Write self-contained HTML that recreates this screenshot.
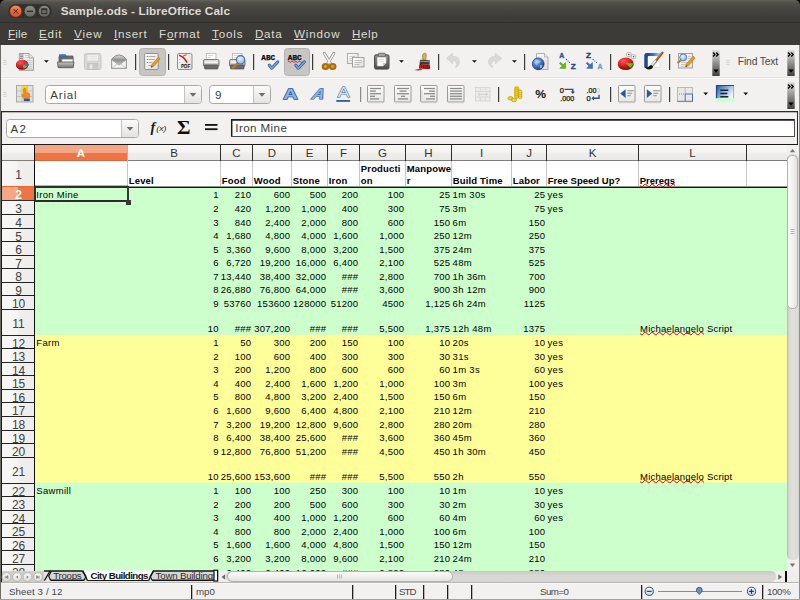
<!DOCTYPE html>
<html><head><meta charset="utf-8"><title>Sample.ods - LibreOffice Calc</title><style>
html,body{margin:0;padding:0}
body{width:800px;height:600px;position:relative;overflow:hidden;background:#f2f1f0;font-family:"Liberation Sans",sans-serif}
.t{position:absolute;white-space:nowrap;margin:0;padding:0}
.b{position:absolute;box-sizing:border-box}
svg{position:absolute;overflow:visible}
</style></head>
<body>
<div class="b" style="left:0px;top:0px;width:800px;height:600px;background:#f2f1f0"></div>
<div class="b" style="left:0px;top:0px;width:800px;height:6px;background:#000"></div>
<div class="b" style="left:0px;top:0px;width:800px;height:23px;border-radius:5px 5px 0 0;background:linear-gradient(#65645d 0px,#5b5a53 1px,#514f4a 3px,#494843 7px,#42413d 12px,#3d3c38 18px,#3c3b37 23px)"></div>
<div class="b" style="left:0px;top:22px;width:800px;height:1px;background:#302f2c"></div>
<div class="b" style="left:0px;top:23px;width:800px;height:22px;background:#3c3b37"></div>
<svg style="left:8px;top:4px" width="46" height="16" viewBox="0 0 46 16">
<defs>
<linearGradient id="gc" x1="0" y1="0" x2="0" y2="1"><stop offset="0" stop-color="#f68d67"/><stop offset="0.500" stop-color="#ec6435"/><stop offset="1" stop-color="#dd5220"/></linearGradient>
<linearGradient id="gm" x1="0" y1="0" x2="0" y2="1"><stop offset="0" stop-color="#8d8c85"/><stop offset="1" stop-color="#67665f"/></linearGradient>
</defs>
<rect x="0.300" y="0.300" width="43.400" height="14" rx="7" fill="#31302d"/>
<circle cx="7.750" cy="7.250" r="6.100" fill="url(#gc)" stroke="#5a2c16" stroke-width="0.800"/>
<path d="M5.500 5l4.500 4.500M10 5l-4.500 4.500" stroke="#4a1c0a" stroke-width="1" fill="none"/>
<circle cx="22" cy="7.250" r="5.900" fill="url(#gm)" stroke="#2c2b28" stroke-width="0.800"/>
<path d="M19 7.300h6" stroke="#2f2e2b" stroke-width="1.300"/>
<circle cx="36.250" cy="7.250" r="5.900" fill="url(#gm)" stroke="#2c2b28" stroke-width="0.800"/>
<rect x="33.700" y="5" width="5.100" height="4.700" fill="#6b6a63" stroke="#2f2e2b" stroke-width="1"/>
<path d="M33.700 5.300h5.100" stroke="#2f2e2b" stroke-width="1.500"/>
</svg>
<div class="t" style="left:60.8px;top:2.91px;font-size:11.8px;line-height:16px;color:#dfdbd2;font-weight:bold;letter-spacing:0.072px;">Sample.ods - LibreOffice Calc</div>
<div class="t" style="left:8px;top:26.18px;font-size:11.6px;line-height:16px;color:#dfdbd2;letter-spacing:0.177px;text-underline-offset:1px"><u>F</u>ile</div>
<div class="t" style="left:39px;top:26.18px;font-size:11.6px;line-height:16px;color:#dfdbd2;letter-spacing:0.853px;text-underline-offset:1px"><u>E</u>dit</div>
<div class="t" style="left:74px;top:26.18px;font-size:11.6px;line-height:16px;color:#dfdbd2;letter-spacing:0.867px;text-underline-offset:1px"><u>V</u>iew</div>
<div class="t" style="left:114px;top:26.18px;font-size:11.6px;line-height:16px;color:#dfdbd2;letter-spacing:0.732px;text-underline-offset:1px"><u>I</u>nsert</div>
<div class="t" style="left:159px;top:26.18px;font-size:11.6px;line-height:16px;color:#dfdbd2;letter-spacing:0.778px;text-underline-offset:1px">F<u>o</u>rmat</div>
<div class="t" style="left:212px;top:26.18px;font-size:11.6px;line-height:16px;color:#dfdbd2;letter-spacing:0.864px;text-underline-offset:1px"><u>T</u>ools</div>
<div class="t" style="left:255px;top:26.18px;font-size:11.6px;line-height:16px;color:#dfdbd2;letter-spacing:0.725px;text-underline-offset:1px"><u>D</u>ata</div>
<div class="t" style="left:294px;top:26.18px;font-size:11.6px;line-height:16px;color:#dfdbd2;letter-spacing:0.857px;text-underline-offset:1px"><u>W</u>indow</div>
<div class="t" style="left:352px;top:26.18px;font-size:11.6px;line-height:16px;color:#dfdbd2;letter-spacing:0.636px;text-underline-offset:1px"><u>H</u>elp</div>
<div class="b" style="left:0px;top:45px;width:800px;height:66px;background:#f2f1f0"></div>
<div class="b" style="left:1px;top:77px;width:798px;height:1px;background:#e5e3e0"></div>
<div class="b" style="left:1px;top:78px;width:798px;height:1px;background:#f9f8f7"></div>
<div class="b" style="left:0px;top:45px;width:1px;height:555px;background:#6d6b66"></div>
<div class="b" style="left:799px;top:45px;width:1px;height:555px;background:#908e8a"></div>
<div class="b" style="left:1px;top:111px;width:797px;height:34px;background:#f2f1f0;border:1px solid #2b2a28"></div>
<div class="b" style="left:2px;top:112px;width:795px;height:1px;background:#b9b7b3"></div>
<svg style="left:0;top:45px" width="800" height="100" viewBox="0 45 800 100"><defs>
<linearGradient id="ovf" x1="0" y1="0" x2="0" y2="1"><stop offset="0" stop-color="#dededc"/><stop offset="0.35" stop-color="#a9a9a6"/><stop offset="1" stop-color="#3f3f3d"/></linearGradient>
<linearGradient id="pg" x1="0" y1="0" x2="1" y2="1"><stop offset="0" stop-color="#ffffff"/><stop offset="1" stop-color="#dcdcda"/></linearGradient>
<linearGradient id="gry" x1="0" y1="0" x2="0" y2="1"><stop offset="0" stop-color="#c9c9c7"/><stop offset="1" stop-color="#727270"/></linearGradient>
<linearGradient id="prn" x1="0" y1="0" x2="0" y2="1"><stop offset="0" stop-color="#ececea"/><stop offset="1" stop-color="#9c9c9a"/></linearGradient>
<radialGradient id="pie" cx="0.35" cy="0.3" r="0.8"><stop offset="0" stop-color="#f45a5a"/><stop offset="0.6" stop-color="#d81c1c"/><stop offset="1" stop-color="#9e0b0b"/></radialGradient>
<radialGradient id="glb" cx="0.35" cy="0.3" r="0.8"><stop offset="0" stop-color="#8db6ea"/><stop offset="0.6" stop-color="#3b6cb5"/><stop offset="1" stop-color="#1e3f78"/></radialGradient>
<radialGradient id="mag" cx="0.4" cy="0.35" r="0.7"><stop offset="0" stop-color="#e6f1fc"/><stop offset="1" stop-color="#8db4e2"/></radialGradient>
<linearGradient id="bga" x1="0" y1="0" x2="1" y2="0.6"><stop offset="0" stop-color="#1f4f96"/><stop offset="0.45" stop-color="#7a9fd0"/><stop offset="1" stop-color="#f4f6f8"/></linearGradient>
<linearGradient id="cmb" x1="0" y1="0" x2="0" y2="1"><stop offset="0" stop-color="#fafaf9"/><stop offset="1" stop-color="#e4e3e1"/></linearGradient>
<linearGradient id="abx" x1="0" y1="0" x2="0" y2="1"><stop offset="0" stop-color="#fdfdfc"/><stop offset="1" stop-color="#e6e6e3"/></linearGradient>
</defs>
<path d="M3 60.4h3.600M3 62.4h3.600M3 64.4h3.600" stroke="#d3d1cd" stroke-width="0.900"/>
<path d="M3 92.4h3.600M3 94.4h3.600M3 96.4h3.600" stroke="#d3d1cd" stroke-width="0.900"/>
<path d="M726 60.4h3.600M726 62.4h3.600M726 64.4h3.600" stroke="#d3d1cd" stroke-width="0.900"/>
<rect x="135" y="54" width="1" height="16" fill="#3a3a38"/><rect x="136" y="54" width="0.6" height="16" fill="#3a3a38" opacity="0.35"/>
<rect x="168" y="54" width="1" height="16" fill="#3a3a38"/><rect x="169" y="54" width="0.6" height="16" fill="#3a3a38" opacity="0.35"/>
<rect x="253" y="54" width="1" height="16" fill="#3a3a38"/><rect x="254" y="54" width="0.6" height="16" fill="#3a3a38" opacity="0.35"/>
<rect x="312" y="54" width="1" height="16" fill="#3a3a38"/><rect x="313" y="54" width="0.6" height="16" fill="#3a3a38" opacity="0.35"/>
<rect x="438" y="54" width="1" height="16" fill="#3a3a38"/><rect x="439" y="54" width="0.6" height="16" fill="#3a3a38" opacity="0.35"/>
<rect x="524" y="54" width="1" height="16" fill="#3a3a38"/><rect x="525" y="54" width="0.6" height="16" fill="#3a3a38" opacity="0.35"/>
<rect x="610" y="54" width="1" height="16" fill="#3a3a38"/><rect x="611" y="54" width="0.6" height="16" fill="#3a3a38" opacity="0.35"/>
<rect x="669" y="54" width="1" height="16" fill="#3a3a38"/><rect x="670" y="54" width="0.6" height="16" fill="#3a3a38" opacity="0.35"/>
<rect x="360" y="87" width="1" height="15" fill="#8c8a87"/><rect x="361" y="87" width="0.6" height="15" fill="#8c8a87" opacity="0.35"/>
<rect x="498" y="87" width="1" height="15" fill="#3a3a38"/><rect x="499" y="87" width="0.6" height="15" fill="#3a3a38" opacity="0.35"/>
<rect x="610" y="87" width="1" height="15" fill="#3a3a38"/><rect x="611" y="87" width="0.6" height="15" fill="#3a3a38" opacity="0.35"/>
<rect x="669" y="87" width="1" height="15" fill="#3a3a38"/><rect x="670" y="87" width="0.6" height="15" fill="#3a3a38" opacity="0.35"/>
<rect x="139.5" y="48.5" width="26" height="27" rx="3" fill="#c8c6c3" stroke="#b4b2ae"/>
<rect x="284.5" y="48.5" width="25" height="27" rx="3" fill="#c8c6c3" stroke="#b4b2ae"/>
<rect x="712.3" y="50" width="7.400" height="26" fill="url(#ovf)"/>
<path d="M713 52.5l2 2l-2 2M716.2 52.5l2 2l-2 2" stroke="#000" stroke-width="1.3" fill="none"/>
<path d="M713.3 69.5h5.4l-2.7 3.2z" fill="#000"/>
<rect x="787.3" y="50" width="7.400" height="26" fill="url(#ovf)"/>
<path d="M788 52.5l2 2l-2 2M791.2 52.5l2 2l-2 2" stroke="#000" stroke-width="1.3" fill="none"/>
<path d="M788.3 69.5h5.4l-2.7 3.2z" fill="#000"/>
<rect x="787.3" y="82" width="7.400" height="27" fill="url(#ovf)"/>
<path d="M788 84.5l2 2l-2 2M791.2 84.5l2 2l-2 2" stroke="#000" stroke-width="1.3" fill="none"/>
<path d="M788.3 102.5h5.4l-2.7 3.2z" fill="#000"/>
<path d="M19.300 53.500h9.700l4.500 4.500v12.300h-14.200z" fill="url(#pg)" stroke="#9b9b99" stroke-width="1"/>
<path d="M29 53.500v4.500h4.500" fill="#e4e4e2" stroke="#9b9b99" stroke-width="0.800"/>
<path d="M20 55h3.500M20 56.700h3.500M20 58.400h3.500" stroke="#6a6a68" stroke-width="0.900"/>
<path d="M24.500 55.500h4M24.500 57.500h4M27 60.500h5M28.500 62.500h3.500M29 64.500h3M29 66.500h3M27 68.500h5" stroke="#c3c3c1" stroke-width="0.800"/>
<ellipse cx="22.200" cy="65.300" rx="6.200" ry="4.500" fill="#7a0a0a"/>
<ellipse cx="22.200" cy="64.200" rx="6.200" ry="4.500" fill="url(#pie)"/>
<path d="M23 64.400L27.800 62.300A6.200 4.500 0 0 1 27.400 66.800z" fill="#3f6fc0"/>
<path d="M23 64.400L27.400 66.800A6.200 4.500 0 0 1 23.400 68.600z" fill="#6cc02c"/>
<path d="M44.0 60.2h4.800l-2.400 2.600z" fill="#111"/>
<rect x="59" y="56" width="14.200" height="10.500" rx="1" fill="#6c6c6a" stroke="#58585a" stroke-width="0.800"/>
<path d="M59.500 57v-2.300h6l1 2.300z" fill="#4f78b8" stroke="#34558c" stroke-width="0.700"/>
<rect x="62" y="59.300" width="10.800" height="3" fill="#fbfbfb" stroke="#b5b5b3" stroke-width="0.500"/>
<path d="M57.500 62h16.500l-0.800 5.700h-15z" fill="url(#gry)" stroke="#5c5c5a" stroke-width="0.900"/>
<rect x="84.500" y="53.500" width="16.500" height="16" rx="1.800" fill="#d8d8d6" stroke="#c6c6c4"/>
<rect x="87" y="54.500" width="11.500" height="6.500" fill="#f1f1f0" stroke="#cfcfcd" stroke-width="0.700"/>
<path d="M88.500 56.500h8.500M88.500 58.500h8.500" stroke="#dededc" stroke-width="0.800"/>
<rect x="87.700" y="63.300" width="10" height="6.200" fill="#c9c9c7" stroke="#bdbdbb" stroke-width="0.700"/>
<rect x="89.700" y="64.500" width="2.600" height="4.500" fill="#e9e9e7"/>
<defs><linearGradient id="env" x1="0" y1="0" x2="0" y2="1"><stop offset="0" stop-color="#e6e6e4"/><stop offset="0.380" stop-color="#8e8e8c"/><stop offset="1" stop-color="#ececea"/></linearGradient></defs>
<path d="M111.500 59.300Q119 50.500 126.500 59.300V68.500H111.500z" fill="url(#env)" stroke="#8b8b89" stroke-width="1"/>
<path d="M111.800 59.800L119 65.200L126.200 59.800V68.200H111.800z" fill="#f7f7f6" stroke="#9d9d9b" stroke-width="0.700"/>
<path d="M111.800 68.200L117.300 63.900M126.200 68.200L120.700 63.900" fill="none" stroke="#b9b9b7" stroke-width="0.800"/>
<rect x="144.700" y="53.500" width="13.500" height="16" rx="1" fill="url(#pg)" stroke="#8f8f8d"/>
<path d="M148.5 56.5h7M148.5 59.5h6M148.5 62.5h4M148.5 65.5h3" stroke="#a4a4a2" stroke-width="0.9"/>
<path d="M146.8 56.5h1M146.8 59.5h1M146.8 62.5h1" stroke="#555" stroke-width="0.9"/>
<path d="M158.3 57.2l1.8 1.6l-6.3 7.4l-2.6 1.2l0.7-2.8z" fill="#f39a1d" stroke="#b5650c" stroke-width="0.6"/>
<path d="M151.2 67.4l0.4-1.5l1.1 0.9z" fill="#222"/>
<rect x="177.5" y="53.5" width="14.5" height="16" rx="1.5" fill="url(#pg)" stroke="#8f8f8d"/>
<path d="M179 55.2C182.5 56.3 185.2 58.8 187 62.6" fill="none" stroke="#d41414" stroke-width="1.5"/>
<path d="M182 57.3C183.2 55.6 184.8 54.8 186.6 54.9" fill="none" stroke="#e04848" stroke-width="1.1"/>
<text x="181" y="67.900" font-family="Liberation Sans" font-weight="bold" font-size="4.800" fill="#151515" textLength="9.300" lengthAdjust="spacingAndGlyphs">PDF</text>
<path d="M179.3 59.5h0.8M179.3 62.5h0.8" stroke="#777" stroke-width="0.8"/>
<rect x="206.5" y="53.5" width="9.5" height="6.5" fill="#fbfbfb" stroke="#b3b3b1" stroke-width="0.8"/>
<path d="M208 55.5h5M208 57.5h3" stroke="#cfcfcd" stroke-width="0.8"/>
<rect x="203.5" y="59.5" width="15.5" height="7" rx="1.5" fill="url(#prn)" stroke="#6d6d6b" stroke-width="0.9"/>
<rect x="204.6" y="61.6" width="13.2" height="1.6" fill="#f7f7f6"/>
<rect x="204.5" y="65" width="13.5" height="4" rx="0.8" fill="#6a6a68" stroke="#4f4f4d" stroke-width="0.7"/>
<rect x="232.5" y="53.5" width="9.5" height="6.5" fill="#fbfbfb" stroke="#b3b3b1" stroke-width="0.8"/>
<path d="M234 55.5h5M234 57.5h3" stroke="#cfcfcd" stroke-width="0.8"/>
<rect x="229.5" y="59.5" width="15.5" height="7" rx="1.5" fill="url(#prn)" stroke="#6d6d6b" stroke-width="0.9"/>
<rect x="230.6" y="61.6" width="13.2" height="1.6" fill="#f7f7f6"/>
<rect x="230.5" y="65" width="13.5" height="4" rx="0.8" fill="#6a6a68" stroke="#4f4f4d" stroke-width="0.7"/>
<path d="M237.6 63l-4.6 5" stroke="#c77c12" stroke-width="2.2" stroke-linecap="round"/>
<circle cx="240.6" cy="59.8" r="4.2" fill="url(#mag)" stroke="#4a6f9f" stroke-width="1.1"/>
<text x="261.3" y="59.900" font-family="Liberation Mono" font-weight="bold" font-size="6.900" fill="#0a0a0a" stroke="#0a0a0a" stroke-width="0.250" textLength="13.800" lengthAdjust="spacingAndGlyphs">ABC</text>
<path d="M269.3 65.200l2.500 3l6-6.300" fill="none" stroke="#2f5d9e" stroke-width="3" stroke-linecap="round" stroke-linejoin="round"/>
<path d="M269.3 65.200l2.500 3l6-6.300" fill="none" stroke="#7fa9e0" stroke-width="1.400" stroke-linecap="round" stroke-linejoin="round"/>
<text x="287.8" y="59.900" font-family="Liberation Mono" font-weight="bold" font-size="6.900" fill="#0a0a0a" stroke="#0a0a0a" stroke-width="0.250" textLength="13.800" lengthAdjust="spacingAndGlyphs">ABC</text>
<path d="M287.8 61.800q0.900 -1 1.800 0t1.800 0t1.800 0t1.800 0t1.800 0t1.800 0t1.800 0t1.800 0" fill="none" stroke="#e01010" stroke-width="0.900"/>
<path d="M295.8 65.200l2.500 3l6-6.300" fill="none" stroke="#2f5d9e" stroke-width="3" stroke-linecap="round" stroke-linejoin="round"/>
<path d="M295.8 65.200l2.500 3l6-6.300" fill="none" stroke="#7fa9e0" stroke-width="1.400" stroke-linecap="round" stroke-linejoin="round"/>
<path d="M324.300 53.300L331.400 65M333.900 53.300L326.800 65" stroke="#8a8a88" stroke-width="2.800" stroke-linecap="round"/>
<path d="M324.300 53.300L331.400 65M333.900 53.300L326.800 65" stroke="#f1f1ef" stroke-width="1.500" stroke-linecap="round"/>
<ellipse cx="325.500" cy="66.500" rx="2.700" ry="2.500" fill="#d6a24e" stroke="#b06c06" stroke-width="2.200"/>
<ellipse cx="332.700" cy="66.500" rx="2.700" ry="2.500" fill="#d6a24e" stroke="#b06c06" stroke-width="2.200"/>
<rect x="347.5" y="53.5" width="10.5" height="10" fill="url(#pg)" stroke="#a3a3a1" stroke-width="0.9"/>
<path d="M349.5 56.5h6M349.5 58.5h6M349.5 60.5h3" stroke="#c2c2c0" stroke-width="0.8"/>
<rect x="352.5" y="57.5" width="11.5" height="9.5" fill="url(#pg)" stroke="#9b9b99" stroke-width="0.9"/>
<path d="M354.5 60.5h7.5M354.5 62.5h7.5M354.5 64.5h5" stroke="#b3b3b1" stroke-width="0.8"/>
<defs><linearGradient id="clp" x1="0" y1="0" x2="0" y2="1"><stop offset="0" stop-color="#8c8c8a"/><stop offset="0.600" stop-color="#6a6a67"/><stop offset="1" stop-color="#484846"/></linearGradient></defs>
<rect x="374.500" y="54.800" width="14.500" height="14.300" rx="1.500" fill="url(#clp)" stroke="#4b4b49"/>
<rect x="378.300" y="53.200" width="7" height="3.400" rx="1" fill="#a3a3a0" stroke="#5a5a58" stroke-width="0.800"/>
<path d="M377.300 57.300h8.700v5.700l-3 3h-5.700z" fill="#f9f9f8" stroke="#d5d5d3" stroke-width="0.500"/>
<path d="M386 63l-3 3v-3z" fill="#c4c4c2"/>
<path d="M379 59.500h5M379 61.500h5" stroke="#d6d6d4" stroke-width="0.800"/>
<path d="M399.09999999999997 60.2h4.800l-2.400 2.600z" fill="#111"/>
<path d="M423.900 53.500c1.400-0.800 2.500 0 2.300 1.500l-0.500 4.800h-2.800l-0.300-3.800c-0.100-1.200 0.400-2 1.300-2.500z" fill="#e3b04d" stroke="#9a6a18" stroke-width="0.700"/>
<path d="M420 59.700l9.800 0.500l-0.300 4.600l-9.900-0.700z" fill="#3a3a39"/>
<path d="M420.200 61.200l9.400 0.500" stroke="#b5b5b3" stroke-width="0.800"/>
<path d="M419.500 64l10.200 0.700l0.500 4c-3.400 0.500-7 0.400-11.200-0.400z" fill="#7a1010"/>
<path d="M420.500 65v3M422.500 65v3.300M424.500 65.200v3.300M426.500 65.300v3.300M428.500 65.400v3" stroke="#d42020" stroke-width="0.800"/>
<path d="M413.800 69.900c2.600-0.200 5-0.700 6.900-1.600l1.600 1.500c-2.800 0.700-5.700 0.800-8.500 0.100z" fill="#e01b1b"/>
<path d="M446.3 58.3L452.6 53.2V56.3C457.5 56.3 459.6 59.2 459.4 62.3C459.2 65 457.6 66.8 455.3 67.4C456.8 65.6 457 63.6 456 62.2C455.2 61 454 60.5 452.6 60.5V63.6z" fill="#d9d9d7" stroke="#cacac8" stroke-width="0.6"/>
<path d="M472.0 60.2h4.800l-2.400 2.600z" fill="#111"/>
<path d="M501.7 58.3L495.4 53.2V56.3C490.5 56.3 488.400 59.2 488.6 62.3C488.8 65 490.4 66.8 492.7 67.4C491.2 65.600 491 63.6 492 62.2C492.8 61 494 60.5 495.4 60.5V63.6z" fill="#d9d9d7" stroke="#cacac8" stroke-width="0.6"/>
<path d="M512.0 60.2h4.800l-2.400 2.600z" fill="#111"/>
<path d="M536.5 53.5h8l3.5 3.5v12.500h-11.500z" fill="url(#pg)" stroke="#a6a6a4" stroke-width="0.9"/>
<path d="M544.5 53.500v3.500h3.500" fill="#e8e8e6" stroke="#a6a6a4" stroke-width="0.7"/>
<circle cx="538.200" cy="63.800" r="5.900" fill="url(#glb)" stroke="#1f3f78" stroke-width="0.800"/>
<path d="M534.500 61q1.500-1.800 3.500-0.800t2.800 0.500q-0.500 2.300-2.200 2.300t-1 2.200q-2.500-0.500-3.100-4.200z M539.800 65.200q1.700-0.500 2.700 0.600q-0.500 2.200-2.200 2.700z" fill="#a8ccf4" opacity="0.850"/>
<text x="559.2" y="58.300" font-family="Liberation Sans" font-weight="bold" font-size="6.600" fill="#2a5298" stroke="#2a5298" stroke-width="0.350" textLength="5" lengthAdjust="spacingAndGlyphs">A</text>
<text x="570.7" y="68.900" font-family="Liberation Sans" font-weight="bold" font-size="6.600" fill="#1f3f7a" stroke="#1f3f7a" stroke-width="0.350" textLength="5" lengthAdjust="spacingAndGlyphs">Z</text>
<circle cx="566.4000000000001" cy="59.500" r="0.650" fill="#2a4f8f"/><circle cx="568.0" cy="61" r="0.600" fill="#2a4f8f"/><circle cx="569.6" cy="62.400" r="0.550" fill="#2a4f8f"/>
<path transform="translate(559.2 62)" d="M0.200 1.400L1.400 0.200L4 2.800L6.400 0.600L6.500 6.400L0.600 6.300L3 3.900Z" fill="#62be16" stroke="#3e8a0c" stroke-width="0.500" stroke-linejoin="round"/>
<text x="586" y="58.300" font-family="Liberation Sans" font-weight="bold" font-size="6.600" fill="#1f3f7a" stroke="#1f3f7a" stroke-width="0.350" textLength="5" lengthAdjust="spacingAndGlyphs">Z</text>
<text x="597.5" y="68.900" font-family="Liberation Sans" font-weight="bold" font-size="6.600" fill="#6a9ad8" stroke="#6a9ad8" stroke-width="0.350" textLength="5" lengthAdjust="spacingAndGlyphs">A</text>
<circle cx="593.2" cy="59.500" r="0.650" fill="#2a4f8f"/><circle cx="594.8" cy="61" r="0.600" fill="#2a4f8f"/><circle cx="596.4" cy="62.400" r="0.550" fill="#2a4f8f"/>
<path transform="translate(586 62)" d="M0.200 1.400L1.400 0.200L4 2.800L6.400 0.600L6.500 6.400L0.600 6.300L3 3.900Z" fill="#3c74c4" stroke="#244f94" stroke-width="0.500" stroke-linejoin="round"/>
<ellipse cx="625.700" cy="64.600" rx="7.800" ry="5.400" fill="#9a0c0c"/>
<ellipse cx="625.700" cy="63" rx="7.800" ry="5.400" fill="url(#pie)"/>
<path d="M625.500 62.800L633.500 63.600A7.800 5.400 0 0 1 630.200 67.700z" fill="#58c818"/>
<path d="M630.200 67.700L633.500 63.600L633.500 65.200L630.200 69.300z" fill="#2f7d0a"/>
<rect x="626.600" y="52.600" width="4.400" height="3.800" rx="1" fill="#f4f4f2" stroke="#9c9c9a" stroke-width="0.700"/>
<rect x="631.300" y="54.800" width="4.400" height="3.800" rx="1" fill="#f4f4f2" stroke="#9c9c9a" stroke-width="0.700"/>
<circle cx="628.800" cy="54.500" r="0.700" fill="#444"/><circle cx="633.500" cy="56.700" r="0.700" fill="#444"/>
<defs><linearGradient id="dfr" x1="0" y1="0" x2="1" y2="0"><stop offset="0" stop-color="#1c4a90"/><stop offset="0.550" stop-color="#3f6db0"/><stop offset="1" stop-color="#cfd9e8"/></linearGradient></defs>
<rect x="647.500" y="56" width="12.500" height="11.500" fill="#fdfdfd" stroke="#d6d6d4" stroke-width="0.600"/>
<path d="M644.500 55.800c0-1.900 0.900-2.800 2.800-2.800h13v3h-11.800c-0.700 0-1 0.300-1 1v10.500h-3z" fill="url(#dfr)"/>
<path d="M644.500 55.800c0-1.900 0.900-2.800 2.800-2.800h2v3h-0.800c-0.700 0-1 0.300-1 1v10.500h-3z" fill="#1c4a90"/>
<path d="M662.400 52.800l-6.600 8.200" stroke="#8e5a24" stroke-width="2.400" stroke-linecap="round"/>
<path d="M662 52.600l-6.400 8" stroke="#c08a4c" stroke-width="0.800" stroke-linecap="round"/>
<path d="M656 60.700l-4.600 5.600" stroke="#8f8f8d" stroke-width="3"/>
<path d="M655.700 60.500l-4.600 5.600" stroke="#ececea" stroke-width="1.500"/>
<path d="M651.900 65.400c-1.300-0.300-2.600 0.300-3.200 1.400c-0.800 0.600-2.400 0.400-3.700 0c0.300 1.600 1.800 2.700 3.800 2.700c2.300 0 3.900-1.200 4.400-3z" fill="#121212"/>
<rect x="678.500" y="53.500" width="14" height="14.500" fill="url(#pg)" stroke="#9b9b99" stroke-width="0.900"/>
<path d="M681 62.500h9M681 64.500h7M681 66.300h6M688 56.500h3M688 58.500h3" stroke="#c0c0be" stroke-width="0.800"/>
<path d="M680.800 60.200l-2.600 2.400" stroke="#c07a14" stroke-width="2.100" stroke-linecap="round"/>
<circle cx="683.200" cy="57.400" r="3.500" fill="url(#mag)" stroke="#5a7ba6" stroke-width="1"/>
<path d="M693.100 56.300l1.900 1.600l-6.600 7.700l-2.700 1.200l0.700-2.800z" fill="#f39a1d" stroke="#b5650c" stroke-width="0.600"/>
<path d="M685.700 66.800l0.400-1.500l1.100 0.900z" fill="#222"/>
<rect x="16.500" y="85.500" width="16.500" height="16.500" fill="#e1e1dd" stroke="#a2a29e" stroke-width="0.900"/>
<path d="M22 85.500v16.500M27.500 85.500v16.500M16.500 91h16.500M16.500 96.500h16.500" stroke="#b9b9b5" stroke-width="0.800"/>
<rect x="22.200" y="86.300" width="4.800" height="5" fill="#f6d90a"/>
<path d="M24.700 88.300c0.700 0 1.100 0.400 1.100 1.100v3.200l2.600 0.400c1 0.200 1.500 0.800 1.400 1.800l-0.400 3.700h-5.600l-2-3.200c-0.400-0.700 0.300-1.300 1-0.800l0.800 0.700v-5.800c0-0.700 0.400-1.100 1.100-1.100z" fill="#f28c1c" stroke="#c7650a" stroke-width="0.500"/>
<rect x="23.800" y="98.800" width="6" height="2.300" fill="#2757a8"/>
<rect x="45.5" y="85.5" width="156" height="18" rx="3" fill="#fff" stroke="#aaa8a4"/>
<path d="M184.5 86h14a2.500 2.500 0 0 1 2.500 2.500v12a2.500 2.500 0 0 1 -2.500 2.500h-14z" fill="url(#cmb)"/>
<path d="M184.5 86v17" stroke="#c4c2be" stroke-width="1"/>
<path d="M189.7 92.9h6.600l-3.300 3.900z" fill="#6f6e6a"/>
<rect x="209.5" y="85.5" width="61" height="18" rx="3" fill="#fff" stroke="#aaa8a4"/>
<path d="M253.5 86h14a2.500 2.500 0 0 1 2.500 2.500v12a2.500 2.500 0 0 1 -2.500 2.500h-14z" fill="url(#cmb)"/>
<path d="M253.5 86v17" stroke="#c4c2be" stroke-width="1"/>
<path d="M258.7 92.9h6.600l-3.300 3.900z" fill="#6f6e6a"/>
<rect x="6.5" y="119.5" width="132" height="18" rx="3" fill="#fff" stroke="#aaa8a4"/>
<path d="M121.5 120h14a2.500 2.500 0 0 1 2.500 2.500v12a2.500 2.500 0 0 1 -2.500 2.500h-14z" fill="url(#cmb)"/>
<path d="M121.5 120v17" stroke="#c4c2be" stroke-width="1"/>
<path d="M126.7 126.9h6.600l-3.300 3.900z" fill="#6f6e6a"/>
<text x="283.300" y="99.100" font-family="Liberation Sans" font-weight="bold" font-size="14.800" fill="#8db4e6" stroke="#23539a" stroke-width="1.300" paint-order="stroke" textLength="14.400" lengthAdjust="spacingAndGlyphs">A</text>
<g transform="translate(310.800 99.100) skewX(-24)"><text x="0" y="0" font-family="Liberation Sans" font-weight="bold" font-size="14.800" fill="#8db4e6" stroke="#23539a" stroke-width="1.200" paint-order="stroke" textLength="12" lengthAdjust="spacingAndGlyphs">A</text></g>
<text x="337.700" y="97.100" font-family="Liberation Sans" font-size="15.300" fill="#dbe7f6" stroke="#23539a" stroke-width="0.950" paint-order="stroke" textLength="11.600" lengthAdjust="spacingAndGlyphs">A</text>
<rect x="336.300" y="100.100" width="13.800" height="1.700" fill="#23539a"/>
<rect x="367.5" y="85.500" width="16.500" height="16.500" rx="0.800" fill="url(#abx)" stroke="#9b9a96"/><path d="M368 102.700h16" stroke="#d0cfcb" stroke-width="0.800"/>
<path d="M370 88.5h11" stroke="#8b8c88" stroke-width="1.300"/>
<path d="M370 91.1h6" stroke="#8b8c88" stroke-width="1.300"/>
<path d="M370 93.7h11" stroke="#8b8c88" stroke-width="1.300"/>
<path d="M370 96.3h5" stroke="#8b8c88" stroke-width="1.300"/>
<path d="M370 98.9h9" stroke="#8b8c88" stroke-width="1.300"/>
<rect x="394.5" y="85.500" width="16.500" height="16.500" rx="0.800" fill="url(#abx)" stroke="#9b9a96"/><path d="M395 102.700h16" stroke="#d0cfcb" stroke-width="0.800"/>
<path d="M397 88.5h12" stroke="#8b8c88" stroke-width="1.300"/>
<path d="M399.5 91.1h7.0" stroke="#8b8c88" stroke-width="1.300"/>
<path d="M397 93.7h12" stroke="#8b8c88" stroke-width="1.300"/>
<path d="M401 96.3h4" stroke="#8b8c88" stroke-width="1.300"/>
<path d="M398 98.9h10" stroke="#8b8c88" stroke-width="1.300"/>
<rect x="420.5" y="85.500" width="16.500" height="16.500" rx="0.800" fill="url(#abx)" stroke="#9b9a96"/><path d="M421 102.700h16" stroke="#d0cfcb" stroke-width="0.800"/>
<path d="M424 88.5h11" stroke="#8b8c88" stroke-width="1.300"/>
<path d="M429 91.1h6" stroke="#8b8c88" stroke-width="1.300"/>
<path d="M424 93.7h11" stroke="#8b8c88" stroke-width="1.300"/>
<path d="M430 96.3h5" stroke="#8b8c88" stroke-width="1.300"/>
<path d="M426 98.9h9" stroke="#8b8c88" stroke-width="1.300"/>
<rect x="447.5" y="85.500" width="16.500" height="16.500" rx="0.800" fill="url(#abx)" stroke="#9b9a96"/><path d="M448 102.700h16" stroke="#d0cfcb" stroke-width="0.800"/>
<path d="M450 88.5h12" stroke="#8e8f8b" stroke-width="1.300"/>
<path d="M450 91.1h12" stroke="#8e8f8b" stroke-width="1.300"/>
<path d="M450 93.7h12" stroke="#8e8f8b" stroke-width="1.300"/>
<path d="M450 96.3h12" stroke="#8e8f8b" stroke-width="1.300"/>
<path d="M450 98.9h12" stroke="#8e8f8b" stroke-width="1.300"/>
<path d="M421.800 90.500v9" stroke="#dcdcd8" stroke-width="1.500"/>
<rect x="475.500" y="87.500" width="14.500" height="13.500" fill="#ecece9" stroke="#d2d2cf" stroke-width="0.800"/>
<path d="M480.300 87.500v4M485.200 87.500v4M480.300 97v4M485.200 97v4M475.500 91.500h14.500M475.500 97h14.500" stroke="#d2d2cf" stroke-width="0.800"/>
<path d="M478 94.300h9.500M478 94.300l1.800-1.500M478 94.300l1.800 1.500M487.500 94.300l-1.800-1.500M487.500 94.300l-1.800 1.500" stroke="#c6c6c3" stroke-width="0.800" fill="none"/>
<rect x="514.700" y="86.800" width="4" height="11.500" rx="1.500" fill="#f2cf14" stroke="#b8960a" stroke-width="0.700"/>
<path d="M514.900 89.300h3.600M514.900 91.300h3.600M514.900 93.300h3.600M514.900 95.300h3.600" stroke="#c9a50c" stroke-width="0.600"/>
<rect x="518.500" y="90" width="3.300" height="8.600" rx="1.300" fill="#f5d83a" stroke="#b8960a" stroke-width="0.700"/>
<path d="M518.700 92.500h2.900M518.700 94.500h2.900M518.700 96.500h2.900" stroke="#c9a50c" stroke-width="0.600"/>
<ellipse cx="510.500" cy="98.300" rx="2.600" ry="1.700" fill="#f2cf14" stroke="#b8960a" stroke-width="0.700"/>
<ellipse cx="514" cy="100" rx="2.600" ry="1.700" fill="#f5d83a" stroke="#b8960a" stroke-width="0.700"/>
<text x="535.300" y="97.700" font-family="Liberation Sans" font-weight="bold" font-size="11" fill="#0c0c0c" textLength="10.800" lengthAdjust="spacingAndGlyphs">%</text>
<text x="559.800" y="92.700" font-family="Liberation Sans" font-size="7.300" fill="#111" stroke="#111" stroke-width="0.250" textLength="4.200" lengthAdjust="spacingAndGlyphs">0</text>
<path d="M564.600 89.400h8.200v3" fill="none" stroke="#2c4f80" stroke-width="1.400"/><path d="M570.600 91.600h4.400l-2.200 2.500z" fill="#2c4f80"/>
<text x="560.300" y="100.600" font-family="Liberation Sans" font-size="7" fill="#111" stroke="#111" stroke-width="0.250" textLength="14" lengthAdjust="spacingAndGlyphs">.000</text>
<text x="586.500" y="93" font-family="Liberation Sans" font-size="7" fill="#111" stroke="#111" stroke-width="0.250" textLength="9.800" lengthAdjust="spacingAndGlyphs">.00</text>
<text x="596.500" y="93" font-family="Liberation Sans" font-size="7" fill="#b9b9b7" textLength="3.500" lengthAdjust="spacingAndGlyphs">0</text>
<text x="586.500" y="100.700" font-family="Liberation Sans" font-size="7.300" fill="#111" stroke="#111" stroke-width="0.250" textLength="4.200" lengthAdjust="spacingAndGlyphs">0</text>
<path d="M599 94.800v3.400h-6" fill="none" stroke="#2c4f80" stroke-width="1.400"/><path d="M594 96v4.400l-2.700-2.200z" fill="#2c4f80"/>
<rect x="618.5" y="85.500" width="16.500" height="16.500" rx="0.800" fill="url(#abx)" stroke="#9b9a96"/><path d="M619 102.700h16" stroke="#d0cfcb" stroke-width="0.800"/>
<path d="M625.600 89.300v8.600l-5.400-4.300z" fill="#2a55a0"/>
<path d="M627.300 90.800h6.500M627.300 93.300h5M627.300 95.800h3.500" stroke="#8b8c88" stroke-width="1.100"/>
<rect x="644.5" y="85.500" width="16.500" height="16.500" rx="0.800" fill="url(#abx)" stroke="#9b9a96"/><path d="M645 102.700h16" stroke="#d0cfcb" stroke-width="0.800"/>
<path d="M646.800 89.300v8.600l5.400-4.300z" fill="#2a55a0"/>
<path d="M653.300 90.800h6.500M653.300 93.300h5M653.300 95.800h3.500" stroke="#8b8c88" stroke-width="1.100"/>
<rect x="677.500" y="87.500" width="15" height="13.500" fill="#e8e8e5" stroke="#b3b3af" stroke-width="0.900"/>
<path d="M677 101.600h16" stroke="#858581" stroke-width="1"/>
<path d="M685.200 88.500v5M679 94h5.500" stroke="#7a7a76" stroke-width="0.900" stroke-dasharray="1 1"/>
<path d="M685.200 101v-7h7.300v7" fill="none" stroke="#3a62a8" stroke-width="0.900"/>
<path d="M703.3 92.60000000000001h4.800l-2.400 2.600z" fill="#111"/>
<rect x="716" y="85" width="18" height="13.500" fill="url(#bga)"/>
<path d="M716.500 98.500v-13h17.500" fill="none" stroke="#1f4a8a" stroke-width="1.200"/>
<path d="M733.600 86v12.500" fill="none" stroke="#9a9a98" stroke-width="0.800"/>
<path d="M720.300 90.200h8M720.300 93.500h7M720.300 96.800h8" stroke="#18253f" stroke-width="1.500"/>
<rect x="716" y="98.300" width="18" height="3.900" fill="#ccffcc"/>
<path d="M743.3 92.60000000000001h4.800l-2.400 2.600z" fill="#111"/>
<text x="150.500" y="131.800" font-family="Liberation Serif" font-style="italic" font-weight="bold" font-size="14.500" fill="#1a1a1a">f</text>
<text x="156.300" y="131.300" font-family="Liberation Sans" font-style="italic" font-size="7.800" fill="#222" textLength="10" lengthAdjust="spacingAndGlyphs">(x)</text>
<text x="177" y="133.800" font-family="Liberation Serif" font-weight="bold" font-size="18.500" fill="#0f0f0f" textLength="13.500" lengthAdjust="spacingAndGlyphs">Σ</text>
<rect x="205" y="124" width="12.500" height="1.800" fill="#111"/><rect x="205" y="128.300" width="12.500" height="1.800" fill="#111"/>
<rect x="231" y="119" width="564" height="18" fill="#fff"/>
<path d="M231 119.800h564" stroke="#1c1c1c" stroke-width="1.700"/>
<path d="M231.700 119v18" stroke="#1c1c1c" stroke-width="1.500"/>
<path d="M231 136.500h564" stroke="#4d4d4b" stroke-width="1"/>
<path d="M794.500 119v18" stroke="#4d4d4b" stroke-width="1"/></svg>
<div class="t" style="left:50.3px;top:87.28px;font-size:11.6px;line-height:15px;color:#3c3c3c;letter-spacing:0.759px;">Arial</div>
<div class="t" style="left:215px;top:87.28px;font-size:11.6px;line-height:15px;color:#3c3c3c;">9</div>
<div class="t" style="left:10.5px;top:120.78px;font-size:11.6px;line-height:15px;color:#3c3c3c;letter-spacing:1.156px;">A2</div>
<div class="t" style="left:235.3px;top:120.28px;font-size:11.6px;line-height:15px;color:#3c3c3c;letter-spacing:0.406px;">Iron Mine</div>
<div class="t" style="left:737.8px;top:55.03px;font-size:10.3px;line-height:14px;color:#474747;letter-spacing:-0.155px;">Find Text</div>
<div class="b" style="left:0;top:0;width:800px;height:571px;overflow:hidden">
<div class="b" style="left:2px;top:145px;width:785px;height:426px;background:#fff"></div>
<div class="b" style="left:35px;top:188px;width:752px;height:147px;background:#ccffcc"></div>
<div class="b" style="left:35px;top:335px;width:752px;height:148px;background:#ffff99"></div>
<div class="b" style="left:35px;top:334px;width:752px;height:1px;background:#d6ffc2"></div>
<div class="b" style="left:35px;top:482px;width:752px;height:1px;background:#e9ffb0"></div>
<div class="b" style="left:35px;top:483px;width:752px;height:88px;background:#ccffcc"></div>
<div class="b" style="left:127px;top:161px;width:1px;height:25px;background:#c6c6c6"></div>
<div class="b" style="left:220px;top:161px;width:1px;height:25px;background:#c6c6c6"></div>
<div class="b" style="left:252px;top:161px;width:1px;height:25px;background:#c6c6c6"></div>
<div class="b" style="left:291px;top:161px;width:1px;height:25px;background:#c6c6c6"></div>
<div class="b" style="left:327px;top:161px;width:1px;height:25px;background:#c6c6c6"></div>
<div class="b" style="left:359px;top:161px;width:1px;height:25px;background:#c6c6c6"></div>
<div class="b" style="left:405px;top:161px;width:1px;height:25px;background:#c6c6c6"></div>
<div class="b" style="left:451px;top:161px;width:1px;height:25px;background:#c6c6c6"></div>
<div class="b" style="left:511px;top:161px;width:1px;height:25px;background:#c6c6c6"></div>
<div class="b" style="left:546px;top:161px;width:1px;height:25px;background:#c6c6c6"></div>
<div class="b" style="left:638px;top:161px;width:1px;height:25px;background:#c6c6c6"></div>
<div class="b" style="left:746px;top:161px;width:1px;height:25px;background:#c6c6c6"></div>
<div class="b" style="left:35px;top:186px;width:752px;height:1px;background:rgba(0,0,0,0.420)"></div>
<div class="b" style="left:35px;top:187px;width:752px;height:1px;background:#141414"></div>
<div class="b" style="left:2px;top:145px;width:785px;height:15px;background:linear-gradient(#f8f7f6,#f5f4f3 49%,#efeeed 51%,#eae9e7)"></div>
<div class="b" style="left:2px;top:160px;width:785px;height:1px;background:#7f7e7b"></div>
<div class="b" style="left:35px;top:145px;width:92px;height:8px;background:#f4a685"></div>
<div class="b" style="left:35px;top:153px;width:92px;height:7px;background:#ee7443"></div>
<div class="b" style="left:35px;top:160px;width:92px;height:1px;background:#d8683c"></div>
<div class="b" style="left:127px;top:145px;width:1px;height:16px;background:#b9b2ac"></div>
<div class="b" style="left:220px;top:145px;width:1px;height:16px;background:#2e2e2e"></div>
<div class="b" style="left:252px;top:145px;width:1px;height:16px;background:#2e2e2e"></div>
<div class="b" style="left:291px;top:145px;width:1px;height:16px;background:#2e2e2e"></div>
<div class="b" style="left:327px;top:145px;width:1px;height:16px;background:#2e2e2e"></div>
<div class="b" style="left:359px;top:145px;width:1px;height:16px;background:#2e2e2e"></div>
<div class="b" style="left:405px;top:145px;width:1px;height:16px;background:#2e2e2e"></div>
<div class="b" style="left:451px;top:145px;width:1px;height:16px;background:#2e2e2e"></div>
<div class="b" style="left:511px;top:145px;width:1px;height:16px;background:#2e2e2e"></div>
<div class="b" style="left:546px;top:145px;width:1px;height:16px;background:#2e2e2e"></div>
<div class="b" style="left:638px;top:145px;width:1px;height:16px;background:#2e2e2e"></div>
<div class="b" style="left:746px;top:145px;width:1px;height:16px;background:#2e2e2e"></div>
<div class="t" style="left:-19.0px;width:200px;text-align:center;top:145.82px;font-size:11.5px;line-height:15px;color:#fff;font-weight:bold;">A</div>
<div class="t" style="left:74.0px;width:200px;text-align:center;top:145.82px;font-size:11.5px;line-height:15px;color:#333;">B</div>
<div class="t" style="left:136.5px;width:200px;text-align:center;top:145.82px;font-size:11.5px;line-height:15px;color:#333;">C</div>
<div class="t" style="left:172.0px;width:200px;text-align:center;top:145.82px;font-size:11.5px;line-height:15px;color:#333;">D</div>
<div class="t" style="left:209.5px;width:200px;text-align:center;top:145.82px;font-size:11.5px;line-height:15px;color:#333;">E</div>
<div class="t" style="left:243.5px;width:200px;text-align:center;top:145.82px;font-size:11.5px;line-height:15px;color:#333;">F</div>
<div class="t" style="left:282.5px;width:200px;text-align:center;top:145.82px;font-size:11.5px;line-height:15px;color:#333;">G</div>
<div class="t" style="left:328.5px;width:200px;text-align:center;top:145.82px;font-size:11.5px;line-height:15px;color:#333;">H</div>
<div class="t" style="left:381.5px;width:200px;text-align:center;top:145.82px;font-size:11.5px;line-height:15px;color:#333;">I</div>
<div class="t" style="left:429.0px;width:200px;text-align:center;top:145.82px;font-size:11.5px;line-height:15px;color:#333;">J</div>
<div class="t" style="left:492.5px;width:200px;text-align:center;top:145.82px;font-size:11.5px;line-height:15px;color:#333;">K</div>
<div class="t" style="left:592.5px;width:200px;text-align:center;top:145.82px;font-size:11.5px;line-height:15px;color:#333;">L</div>
<div class="b" style="left:2px;top:161px;width:32px;height:410px;background:linear-gradient(90deg,#f8f7f6,#f5f4f3 49%,#f0efee 51%,#eeedec)"></div>
<div class="b" style="left:34px;top:145px;width:1px;height:426px;background:#111"></div>
<div class="t" style="left:-81.5px;width:200px;text-align:center;top:167.04px;font-size:12px;line-height:16px;color:#404040;letter-spacing:-0.100px;">1</div>
<div class="b" style="left:2px;top:187px;width:16px;height:13px;background:#f4a685"></div>
<div class="b" style="left:18px;top:187px;width:16px;height:13px;background:#ee7443"></div>
<div class="b" style="left:2px;top:200px;width:32px;height:1px;background:#33302e"></div>
<div class="b" style="left:2px;top:186px;width:32px;height:1px;background:#e06a3b"></div>
<div class="t" style="left:-81.5px;width:200px;text-align:center;top:187.04px;font-size:12px;line-height:16px;color:#fff;font-weight:bold;letter-spacing:-0.300px;">2</div>
<div class="b" style="left:2px;top:214px;width:32px;height:1px;background:#222"></div>
<div class="t" style="left:-81.5px;width:200px;text-align:center;top:201.04px;font-size:12px;line-height:16px;color:#404040;letter-spacing:-0.100px;">3</div>
<div class="b" style="left:2px;top:228px;width:32px;height:1px;background:#222"></div>
<div class="t" style="left:-81.5px;width:200px;text-align:center;top:215.04px;font-size:12px;line-height:16px;color:#404040;letter-spacing:-0.100px;">4</div>
<div class="b" style="left:2px;top:241px;width:32px;height:1px;background:#222"></div>
<div class="t" style="left:-81.5px;width:200px;text-align:center;top:228.54px;font-size:12px;line-height:16px;color:#404040;letter-spacing:-0.100px;">5</div>
<div class="b" style="left:2px;top:255px;width:32px;height:1px;background:#222"></div>
<div class="t" style="left:-81.5px;width:200px;text-align:center;top:242.04px;font-size:12px;line-height:16px;color:#404040;letter-spacing:-0.100px;">6</div>
<div class="b" style="left:2px;top:268px;width:32px;height:1px;background:#222"></div>
<div class="t" style="left:-81.5px;width:200px;text-align:center;top:255.54px;font-size:12px;line-height:16px;color:#404040;letter-spacing:-0.100px;">7</div>
<div class="b" style="left:2px;top:282px;width:32px;height:1px;background:#222"></div>
<div class="t" style="left:-81.5px;width:200px;text-align:center;top:269.04px;font-size:12px;line-height:16px;color:#404040;letter-spacing:-0.100px;">8</div>
<div class="b" style="left:2px;top:295px;width:32px;height:1px;background:#222"></div>
<div class="t" style="left:-81.5px;width:200px;text-align:center;top:282.54px;font-size:12px;line-height:16px;color:#404040;letter-spacing:-0.100px;">9</div>
<div class="b" style="left:2px;top:309px;width:32px;height:1px;background:#222"></div>
<div class="t" style="left:-81.5px;width:200px;text-align:center;top:296.04px;font-size:12px;line-height:16px;color:#404040;letter-spacing:-0.100px;">10</div>
<div class="b" style="left:2px;top:335px;width:32px;height:1px;background:#222"></div>
<div class="t" style="left:-81.5px;width:200px;text-align:center;top:316.04px;font-size:12px;line-height:16px;color:#404040;letter-spacing:-0.100px;">11</div>
<div class="b" style="left:2px;top:348px;width:32px;height:1px;background:#222"></div>
<div class="t" style="left:-81.5px;width:200px;text-align:center;top:335.54px;font-size:12px;line-height:16px;color:#404040;letter-spacing:-0.100px;">12</div>
<div class="b" style="left:2px;top:362px;width:32px;height:1px;background:#222"></div>
<div class="t" style="left:-81.5px;width:200px;text-align:center;top:349.04px;font-size:12px;line-height:16px;color:#404040;letter-spacing:-0.100px;">13</div>
<div class="b" style="left:2px;top:375px;width:32px;height:1px;background:#222"></div>
<div class="t" style="left:-81.5px;width:200px;text-align:center;top:362.54px;font-size:12px;line-height:16px;color:#404040;letter-spacing:-0.100px;">14</div>
<div class="b" style="left:2px;top:389px;width:32px;height:1px;background:#222"></div>
<div class="t" style="left:-81.5px;width:200px;text-align:center;top:376.04px;font-size:12px;line-height:16px;color:#404040;letter-spacing:-0.100px;">15</div>
<div class="b" style="left:2px;top:402px;width:32px;height:1px;background:#222"></div>
<div class="t" style="left:-81.5px;width:200px;text-align:center;top:389.54px;font-size:12px;line-height:16px;color:#404040;letter-spacing:-0.100px;">16</div>
<div class="b" style="left:2px;top:416px;width:32px;height:1px;background:#222"></div>
<div class="t" style="left:-81.5px;width:200px;text-align:center;top:403.04px;font-size:12px;line-height:16px;color:#404040;letter-spacing:-0.100px;">17</div>
<div class="b" style="left:2px;top:430px;width:32px;height:1px;background:#222"></div>
<div class="t" style="left:-81.5px;width:200px;text-align:center;top:417.04px;font-size:12px;line-height:16px;color:#404040;letter-spacing:-0.100px;">18</div>
<div class="b" style="left:2px;top:443px;width:32px;height:1px;background:#222"></div>
<div class="t" style="left:-81.5px;width:200px;text-align:center;top:430.54px;font-size:12px;line-height:16px;color:#404040;letter-spacing:-0.100px;">19</div>
<div class="b" style="left:2px;top:457px;width:32px;height:1px;background:#222"></div>
<div class="t" style="left:-81.5px;width:200px;text-align:center;top:444.04px;font-size:12px;line-height:16px;color:#404040;letter-spacing:-0.100px;">20</div>
<div class="b" style="left:2px;top:483px;width:32px;height:1px;background:#222"></div>
<div class="t" style="left:-81.5px;width:200px;text-align:center;top:464.04px;font-size:12px;line-height:16px;color:#404040;letter-spacing:-0.100px;">21</div>
<div class="b" style="left:2px;top:496px;width:32px;height:1px;background:#222"></div>
<div class="t" style="left:-81.5px;width:200px;text-align:center;top:483.54px;font-size:12px;line-height:16px;color:#404040;letter-spacing:-0.100px;">22</div>
<div class="b" style="left:2px;top:510px;width:32px;height:1px;background:#222"></div>
<div class="t" style="left:-81.5px;width:200px;text-align:center;top:497.04px;font-size:12px;line-height:16px;color:#404040;letter-spacing:-0.100px;">23</div>
<div class="b" style="left:2px;top:523px;width:32px;height:1px;background:#222"></div>
<div class="t" style="left:-81.5px;width:200px;text-align:center;top:510.54px;font-size:12px;line-height:16px;color:#404040;letter-spacing:-0.100px;">24</div>
<div class="b" style="left:2px;top:537px;width:32px;height:1px;background:#222"></div>
<div class="t" style="left:-81.5px;width:200px;text-align:center;top:524.04px;font-size:12px;line-height:16px;color:#404040;letter-spacing:-0.100px;">25</div>
<div class="b" style="left:2px;top:550px;width:32px;height:1px;background:#222"></div>
<div class="t" style="left:-81.5px;width:200px;text-align:center;top:537.54px;font-size:12px;line-height:16px;color:#404040;letter-spacing:-0.100px;">26</div>
<div class="b" style="left:2px;top:564px;width:32px;height:1px;background:#222"></div>
<div class="t" style="left:-81.5px;width:200px;text-align:center;top:551.04px;font-size:12px;line-height:16px;color:#404040;letter-spacing:-0.100px;">27</div>
<div class="b" style="left:2px;top:578px;width:32px;height:1px;background:#222"></div>
<div class="t" style="left:-81.5px;width:200px;text-align:center;top:565.04px;font-size:12px;line-height:16px;color:#404040;letter-spacing:-0.100px;">28</div>
<div class="t" style="left:128.8px;top:174.21px;font-size:9.5px;line-height:13px;color:#000;font-weight:bold;letter-spacing:0.150px;">Level</div>
<div class="t" style="left:221.8px;top:174.21px;font-size:9.5px;line-height:13px;color:#000;font-weight:bold;letter-spacing:0.150px;">Food</div>
<div class="t" style="left:253.8px;top:174.21px;font-size:9.5px;line-height:13px;color:#000;font-weight:bold;letter-spacing:0.150px;">Wood</div>
<div class="t" style="left:292.8px;top:174.21px;font-size:9.5px;line-height:13px;color:#000;font-weight:bold;letter-spacing:0.150px;">Stone</div>
<div class="t" style="left:328.8px;top:174.21px;font-size:9.5px;line-height:13px;color:#000;font-weight:bold;letter-spacing:0.150px;">Iron</div>
<div class="t" style="left:452.8px;top:174.21px;font-size:9.5px;line-height:13px;color:#000;font-weight:bold;letter-spacing:0.150px;">Build Time</div>
<div class="t" style="left:512.8px;top:174.21px;font-size:9.5px;line-height:13px;color:#000;font-weight:bold;letter-spacing:0.150px;">Labor</div>
<div class="t" style="left:547.8px;top:174.21px;font-size:9.5px;line-height:13px;color:#000;font-weight:bold;letter-spacing:0.013px;">Free Speed Up?</div>
<div class="t" style="left:639.8px;top:174.21px;font-size:9.5px;line-height:13px;color:#000;font-weight:bold;letter-spacing:-0.012px;text-decoration:underline wavy #e00000 0.6px;text-underline-offset:-1px;text-decoration-skip-ink:none;">Prereqs</div>
<div class="t" style="left:360.8px;top:161.61px;font-size:9.5px;line-height:13px;color:#000;font-weight:bold;letter-spacing:0.150px;">Producti</div>
<div class="t" style="left:360.8px;top:174.21px;font-size:9.5px;line-height:13px;color:#000;font-weight:bold;letter-spacing:0.150px;">on</div>
<div class="t" style="left:406.8px;top:161.61px;font-size:9.5px;line-height:13px;color:#000;font-weight:bold;letter-spacing:0.150px;">Manpowe</div>
<div class="t" style="left:406.8px;top:174.21px;font-size:9.5px;line-height:13px;color:#000;font-weight:bold;">r</div>
<div class="t" style="left:36.3px;top:188.01px;font-size:9.5px;line-height:13px;color:#000;letter-spacing:0.300px;">Iron Mine</div>
<div class="t" style="right:581.3px;top:188.01px;font-size:9.5px;line-height:13px;color:#000;letter-spacing:0.230px;">1</div>
<div class="t" style="right:548.8px;top:188.01px;font-size:9.5px;line-height:13px;color:#000;letter-spacing:0.230px;">210</div>
<div class="t" style="right:509.8px;top:188.01px;font-size:9.5px;line-height:13px;color:#000;letter-spacing:0.230px;">600</div>
<div class="t" style="right:473.8px;top:188.01px;font-size:9.5px;line-height:13px;color:#000;letter-spacing:0.230px;">500</div>
<div class="t" style="right:441.8px;top:188.01px;font-size:9.5px;line-height:13px;color:#000;letter-spacing:0.230px;">200</div>
<div class="t" style="right:395.8px;top:188.01px;font-size:9.5px;line-height:13px;color:#000;letter-spacing:0.230px;">100</div>
<div class="t" style="right:349.8px;top:188.01px;font-size:9.5px;line-height:13px;color:#000;letter-spacing:0.230px;">25</div>
<div class="t" style="left:452.6px;top:188.01px;font-size:9.5px;line-height:13px;color:#000;letter-spacing:0.300px;">1m 30s</div>
<div class="t" style="right:254.79999999999995px;top:188.01px;font-size:9.5px;line-height:13px;color:#000;letter-spacing:0.230px;">25</div>
<div class="t" style="left:547.5px;top:188.01px;font-size:9.5px;line-height:13px;color:#000;letter-spacing:0.300px;">yes</div>
<div class="t" style="right:581.3px;top:202.01px;font-size:9.5px;line-height:13px;color:#000;letter-spacing:0.230px;">2</div>
<div class="t" style="right:548.8px;top:202.01px;font-size:9.5px;line-height:13px;color:#000;letter-spacing:0.230px;">420</div>
<div class="t" style="right:509.8px;top:202.01px;font-size:9.5px;line-height:13px;color:#000;letter-spacing:0.230px;">1,200</div>
<div class="t" style="right:473.8px;top:202.01px;font-size:9.5px;line-height:13px;color:#000;letter-spacing:0.230px;">1,000</div>
<div class="t" style="right:441.8px;top:202.01px;font-size:9.5px;line-height:13px;color:#000;letter-spacing:0.230px;">400</div>
<div class="t" style="right:395.8px;top:202.01px;font-size:9.5px;line-height:13px;color:#000;letter-spacing:0.230px;">300</div>
<div class="t" style="right:349.8px;top:202.01px;font-size:9.5px;line-height:13px;color:#000;letter-spacing:0.230px;">75</div>
<div class="t" style="left:452.6px;top:202.01px;font-size:9.5px;line-height:13px;color:#000;letter-spacing:0.300px;">3m</div>
<div class="t" style="right:254.79999999999995px;top:202.01px;font-size:9.5px;line-height:13px;color:#000;letter-spacing:0.230px;">75</div>
<div class="t" style="left:547.5px;top:202.01px;font-size:9.5px;line-height:13px;color:#000;letter-spacing:0.300px;">yes</div>
<div class="t" style="right:581.3px;top:216.01px;font-size:9.5px;line-height:13px;color:#000;letter-spacing:0.230px;">3</div>
<div class="t" style="right:548.8px;top:216.01px;font-size:9.5px;line-height:13px;color:#000;letter-spacing:0.230px;">840</div>
<div class="t" style="right:509.8px;top:216.01px;font-size:9.5px;line-height:13px;color:#000;letter-spacing:0.230px;">2,400</div>
<div class="t" style="right:473.8px;top:216.01px;font-size:9.5px;line-height:13px;color:#000;letter-spacing:0.230px;">2,000</div>
<div class="t" style="right:441.8px;top:216.01px;font-size:9.5px;line-height:13px;color:#000;letter-spacing:0.230px;">800</div>
<div class="t" style="right:395.8px;top:216.01px;font-size:9.5px;line-height:13px;color:#000;letter-spacing:0.230px;">600</div>
<div class="t" style="right:349.8px;top:216.01px;font-size:9.5px;line-height:13px;color:#000;letter-spacing:0.230px;">150</div>
<div class="t" style="left:452.6px;top:216.01px;font-size:9.5px;line-height:13px;color:#000;letter-spacing:0.300px;">6m</div>
<div class="t" style="right:254.79999999999995px;top:216.01px;font-size:9.5px;line-height:13px;color:#000;letter-spacing:0.230px;">150</div>
<div class="t" style="right:581.3px;top:229.01px;font-size:9.5px;line-height:13px;color:#000;letter-spacing:0.230px;">4</div>
<div class="t" style="right:548.8px;top:229.01px;font-size:9.5px;line-height:13px;color:#000;letter-spacing:0.230px;">1,680</div>
<div class="t" style="right:509.8px;top:229.01px;font-size:9.5px;line-height:13px;color:#000;letter-spacing:0.230px;">4,800</div>
<div class="t" style="right:473.8px;top:229.01px;font-size:9.5px;line-height:13px;color:#000;letter-spacing:0.230px;">4,000</div>
<div class="t" style="right:441.8px;top:229.01px;font-size:9.5px;line-height:13px;color:#000;letter-spacing:0.230px;">1,600</div>
<div class="t" style="right:395.8px;top:229.01px;font-size:9.5px;line-height:13px;color:#000;letter-spacing:0.230px;">1,000</div>
<div class="t" style="right:349.8px;top:229.01px;font-size:9.5px;line-height:13px;color:#000;letter-spacing:0.230px;">250</div>
<div class="t" style="left:452.6px;top:229.01px;font-size:9.5px;line-height:13px;color:#000;letter-spacing:0.300px;">12m</div>
<div class="t" style="right:254.79999999999995px;top:229.01px;font-size:9.5px;line-height:13px;color:#000;letter-spacing:0.230px;">250</div>
<div class="t" style="right:581.3px;top:243.01px;font-size:9.5px;line-height:13px;color:#000;letter-spacing:0.230px;">5</div>
<div class="t" style="right:548.8px;top:243.01px;font-size:9.5px;line-height:13px;color:#000;letter-spacing:0.230px;">3,360</div>
<div class="t" style="right:509.8px;top:243.01px;font-size:9.5px;line-height:13px;color:#000;letter-spacing:0.230px;">9,600</div>
<div class="t" style="right:473.8px;top:243.01px;font-size:9.5px;line-height:13px;color:#000;letter-spacing:0.230px;">8,000</div>
<div class="t" style="right:441.8px;top:243.01px;font-size:9.5px;line-height:13px;color:#000;letter-spacing:0.230px;">3,200</div>
<div class="t" style="right:395.8px;top:243.01px;font-size:9.5px;line-height:13px;color:#000;letter-spacing:0.230px;">1,500</div>
<div class="t" style="right:349.8px;top:243.01px;font-size:9.5px;line-height:13px;color:#000;letter-spacing:0.230px;">375</div>
<div class="t" style="left:452.6px;top:243.01px;font-size:9.5px;line-height:13px;color:#000;letter-spacing:0.300px;">24m</div>
<div class="t" style="right:254.79999999999995px;top:243.01px;font-size:9.5px;line-height:13px;color:#000;letter-spacing:0.230px;">375</div>
<div class="t" style="right:581.3px;top:256.01px;font-size:9.5px;line-height:13px;color:#000;letter-spacing:0.230px;">6</div>
<div class="t" style="right:548.8px;top:256.01px;font-size:9.5px;line-height:13px;color:#000;letter-spacing:0.230px;">6,720</div>
<div class="t" style="right:509.8px;top:256.01px;font-size:9.5px;line-height:13px;color:#000;letter-spacing:0.230px;">19,200</div>
<div class="t" style="right:473.8px;top:256.01px;font-size:9.5px;line-height:13px;color:#000;letter-spacing:0.230px;">16,000</div>
<div class="t" style="right:441.8px;top:256.01px;font-size:9.5px;line-height:13px;color:#000;letter-spacing:0.230px;">6,400</div>
<div class="t" style="right:395.8px;top:256.01px;font-size:9.5px;line-height:13px;color:#000;letter-spacing:0.230px;">2,100</div>
<div class="t" style="right:349.8px;top:256.01px;font-size:9.5px;line-height:13px;color:#000;letter-spacing:0.230px;">525</div>
<div class="t" style="left:452.6px;top:256.01px;font-size:9.5px;line-height:13px;color:#000;letter-spacing:0.300px;">48m</div>
<div class="t" style="right:254.79999999999995px;top:256.01px;font-size:9.5px;line-height:13px;color:#000;letter-spacing:0.230px;">525</div>
<div class="t" style="right:581.3px;top:270.01px;font-size:9.5px;line-height:13px;color:#000;letter-spacing:0.230px;">7</div>
<div class="t" style="right:548.8px;top:270.01px;font-size:9.5px;line-height:13px;color:#000;letter-spacing:0.230px;">13,440</div>
<div class="t" style="right:509.8px;top:270.01px;font-size:9.5px;line-height:13px;color:#000;letter-spacing:0.230px;">38,400</div>
<div class="t" style="right:473.8px;top:270.01px;font-size:9.5px;line-height:13px;color:#000;letter-spacing:0.230px;">32,000</div>
<div class="t" style="right:441.8px;top:270.01px;font-size:9.5px;line-height:13px;color:#000;letter-spacing:0.230px;">###</div>
<div class="t" style="right:395.8px;top:270.01px;font-size:9.5px;line-height:13px;color:#000;letter-spacing:0.230px;">2,800</div>
<div class="t" style="right:349.8px;top:270.01px;font-size:9.5px;line-height:13px;color:#000;letter-spacing:0.230px;">700</div>
<div class="t" style="left:452.6px;top:270.01px;font-size:9.5px;line-height:13px;color:#000;letter-spacing:0.300px;">1h 36m</div>
<div class="t" style="right:254.79999999999995px;top:270.01px;font-size:9.5px;line-height:13px;color:#000;letter-spacing:0.230px;">700</div>
<div class="t" style="right:581.3px;top:283.01px;font-size:9.5px;line-height:13px;color:#000;letter-spacing:0.230px;">8</div>
<div class="t" style="right:548.8px;top:283.01px;font-size:9.5px;line-height:13px;color:#000;letter-spacing:0.230px;">26,880</div>
<div class="t" style="right:509.8px;top:283.01px;font-size:9.5px;line-height:13px;color:#000;letter-spacing:0.230px;">76,800</div>
<div class="t" style="right:473.8px;top:283.01px;font-size:9.5px;line-height:13px;color:#000;letter-spacing:0.230px;">64,000</div>
<div class="t" style="right:441.8px;top:283.01px;font-size:9.5px;line-height:13px;color:#000;letter-spacing:0.230px;">###</div>
<div class="t" style="right:395.8px;top:283.01px;font-size:9.5px;line-height:13px;color:#000;letter-spacing:0.230px;">3,600</div>
<div class="t" style="right:349.8px;top:283.01px;font-size:9.5px;line-height:13px;color:#000;letter-spacing:0.230px;">900</div>
<div class="t" style="left:452.6px;top:283.01px;font-size:9.5px;line-height:13px;color:#000;letter-spacing:0.300px;">3h 12m</div>
<div class="t" style="right:254.79999999999995px;top:283.01px;font-size:9.5px;line-height:13px;color:#000;letter-spacing:0.230px;">900</div>
<div class="t" style="right:581.3px;top:297.01px;font-size:9.5px;line-height:13px;color:#000;letter-spacing:0.230px;">9</div>
<div class="t" style="right:548.8px;top:297.01px;font-size:9.5px;line-height:13px;color:#000;letter-spacing:0.230px;">53760</div>
<div class="t" style="right:509.8px;top:297.01px;font-size:9.5px;line-height:13px;color:#000;letter-spacing:0.230px;">153600</div>
<div class="t" style="right:473.8px;top:297.01px;font-size:9.5px;line-height:13px;color:#000;letter-spacing:0.230px;">128000</div>
<div class="t" style="right:441.8px;top:297.01px;font-size:9.5px;line-height:13px;color:#000;letter-spacing:0.230px;">51200</div>
<div class="t" style="right:395.8px;top:297.01px;font-size:9.5px;line-height:13px;color:#000;letter-spacing:0.230px;">4500</div>
<div class="t" style="right:349.8px;top:297.01px;font-size:9.5px;line-height:13px;color:#000;letter-spacing:0.230px;">1,125</div>
<div class="t" style="left:452.6px;top:297.01px;font-size:9.5px;line-height:13px;color:#000;letter-spacing:0.300px;">6h 24m</div>
<div class="t" style="right:254.79999999999995px;top:297.01px;font-size:9.5px;line-height:13px;color:#000;letter-spacing:0.230px;">1125</div>
<div class="t" style="right:581.3px;top:322.11px;font-size:9.5px;line-height:13px;color:#000;letter-spacing:0.230px;">10</div>
<div class="t" style="right:548.8px;top:322.11px;font-size:9.5px;line-height:13px;color:#000;letter-spacing:0.230px;">###</div>
<div class="t" style="right:509.8px;top:322.11px;font-size:9.5px;line-height:13px;color:#000;letter-spacing:0.230px;">307,200</div>
<div class="t" style="right:473.8px;top:322.11px;font-size:9.5px;line-height:13px;color:#000;letter-spacing:0.230px;">###</div>
<div class="t" style="right:441.8px;top:322.11px;font-size:9.5px;line-height:13px;color:#000;letter-spacing:0.230px;">###</div>
<div class="t" style="right:395.8px;top:322.11px;font-size:9.5px;line-height:13px;color:#000;letter-spacing:0.230px;">5,500</div>
<div class="t" style="right:349.8px;top:322.11px;font-size:9.5px;line-height:13px;color:#000;letter-spacing:0.230px;">1,375</div>
<div class="t" style="left:452.6px;top:322.11px;font-size:9.5px;line-height:13px;color:#000;letter-spacing:0.300px;">12h 48m</div>
<div class="t" style="right:254.79999999999995px;top:322.11px;font-size:9.5px;line-height:13px;color:#000;letter-spacing:0.230px;">1375</div>
<div class="t" style="left:640.1px;top:322.11px;font-size:9.5px;line-height:13px;color:#000;letter-spacing:0.206px;"><span style="text-decoration:underline wavy #e00000 0.6px;text-underline-offset:-1px;text-decoration-skip-ink:none">Michaelangelo</span> Script</div>
<div class="t" style="left:36.3px;top:336.01px;font-size:9.5px;line-height:13px;color:#000;letter-spacing:0.300px;">Farm</div>
<div class="t" style="right:581.3px;top:336.01px;font-size:9.5px;line-height:13px;color:#000;letter-spacing:0.230px;">1</div>
<div class="t" style="right:548.8px;top:336.01px;font-size:9.5px;line-height:13px;color:#000;letter-spacing:0.230px;">50</div>
<div class="t" style="right:509.8px;top:336.01px;font-size:9.5px;line-height:13px;color:#000;letter-spacing:0.230px;">300</div>
<div class="t" style="right:473.8px;top:336.01px;font-size:9.5px;line-height:13px;color:#000;letter-spacing:0.230px;">200</div>
<div class="t" style="right:441.8px;top:336.01px;font-size:9.5px;line-height:13px;color:#000;letter-spacing:0.230px;">150</div>
<div class="t" style="right:395.8px;top:336.01px;font-size:9.5px;line-height:13px;color:#000;letter-spacing:0.230px;">100</div>
<div class="t" style="right:349.8px;top:336.01px;font-size:9.5px;line-height:13px;color:#000;letter-spacing:0.230px;">10</div>
<div class="t" style="left:452.6px;top:336.01px;font-size:9.5px;line-height:13px;color:#000;letter-spacing:0.300px;">20s</div>
<div class="t" style="right:254.79999999999995px;top:336.01px;font-size:9.5px;line-height:13px;color:#000;letter-spacing:0.230px;">10</div>
<div class="t" style="left:547.5px;top:336.01px;font-size:9.5px;line-height:13px;color:#000;letter-spacing:0.300px;">yes</div>
<div class="t" style="right:581.3px;top:350.01px;font-size:9.5px;line-height:13px;color:#000;letter-spacing:0.230px;">2</div>
<div class="t" style="right:548.8px;top:350.01px;font-size:9.5px;line-height:13px;color:#000;letter-spacing:0.230px;">100</div>
<div class="t" style="right:509.8px;top:350.01px;font-size:9.5px;line-height:13px;color:#000;letter-spacing:0.230px;">600</div>
<div class="t" style="right:473.8px;top:350.01px;font-size:9.5px;line-height:13px;color:#000;letter-spacing:0.230px;">400</div>
<div class="t" style="right:441.8px;top:350.01px;font-size:9.5px;line-height:13px;color:#000;letter-spacing:0.230px;">300</div>
<div class="t" style="right:395.8px;top:350.01px;font-size:9.5px;line-height:13px;color:#000;letter-spacing:0.230px;">300</div>
<div class="t" style="right:349.8px;top:350.01px;font-size:9.5px;line-height:13px;color:#000;letter-spacing:0.230px;">30</div>
<div class="t" style="left:452.6px;top:350.01px;font-size:9.5px;line-height:13px;color:#000;letter-spacing:0.300px;">31s</div>
<div class="t" style="right:254.79999999999995px;top:350.01px;font-size:9.5px;line-height:13px;color:#000;letter-spacing:0.230px;">30</div>
<div class="t" style="left:547.5px;top:350.01px;font-size:9.5px;line-height:13px;color:#000;letter-spacing:0.300px;">yes</div>
<div class="t" style="right:581.3px;top:363.01px;font-size:9.5px;line-height:13px;color:#000;letter-spacing:0.230px;">3</div>
<div class="t" style="right:548.8px;top:363.01px;font-size:9.5px;line-height:13px;color:#000;letter-spacing:0.230px;">200</div>
<div class="t" style="right:509.8px;top:363.01px;font-size:9.5px;line-height:13px;color:#000;letter-spacing:0.230px;">1,200</div>
<div class="t" style="right:473.8px;top:363.01px;font-size:9.5px;line-height:13px;color:#000;letter-spacing:0.230px;">800</div>
<div class="t" style="right:441.8px;top:363.01px;font-size:9.5px;line-height:13px;color:#000;letter-spacing:0.230px;">600</div>
<div class="t" style="right:395.8px;top:363.01px;font-size:9.5px;line-height:13px;color:#000;letter-spacing:0.230px;">600</div>
<div class="t" style="right:349.8px;top:363.01px;font-size:9.5px;line-height:13px;color:#000;letter-spacing:0.230px;">60</div>
<div class="t" style="left:452.6px;top:363.01px;font-size:9.5px;line-height:13px;color:#000;letter-spacing:0.300px;">1m 3s</div>
<div class="t" style="right:254.79999999999995px;top:363.01px;font-size:9.5px;line-height:13px;color:#000;letter-spacing:0.230px;">60</div>
<div class="t" style="left:547.5px;top:363.01px;font-size:9.5px;line-height:13px;color:#000;letter-spacing:0.300px;">yes</div>
<div class="t" style="right:581.3px;top:377.01px;font-size:9.5px;line-height:13px;color:#000;letter-spacing:0.230px;">4</div>
<div class="t" style="right:548.8px;top:377.01px;font-size:9.5px;line-height:13px;color:#000;letter-spacing:0.230px;">400</div>
<div class="t" style="right:509.8px;top:377.01px;font-size:9.5px;line-height:13px;color:#000;letter-spacing:0.230px;">2,400</div>
<div class="t" style="right:473.8px;top:377.01px;font-size:9.5px;line-height:13px;color:#000;letter-spacing:0.230px;">1,600</div>
<div class="t" style="right:441.8px;top:377.01px;font-size:9.5px;line-height:13px;color:#000;letter-spacing:0.230px;">1,200</div>
<div class="t" style="right:395.8px;top:377.01px;font-size:9.5px;line-height:13px;color:#000;letter-spacing:0.230px;">1,000</div>
<div class="t" style="right:349.8px;top:377.01px;font-size:9.5px;line-height:13px;color:#000;letter-spacing:0.230px;">100</div>
<div class="t" style="left:452.6px;top:377.01px;font-size:9.5px;line-height:13px;color:#000;letter-spacing:0.300px;">3m</div>
<div class="t" style="right:254.79999999999995px;top:377.01px;font-size:9.5px;line-height:13px;color:#000;letter-spacing:0.230px;">100</div>
<div class="t" style="left:547.5px;top:377.01px;font-size:9.5px;line-height:13px;color:#000;letter-spacing:0.300px;">yes</div>
<div class="t" style="right:581.3px;top:390.01px;font-size:9.5px;line-height:13px;color:#000;letter-spacing:0.230px;">5</div>
<div class="t" style="right:548.8px;top:390.01px;font-size:9.5px;line-height:13px;color:#000;letter-spacing:0.230px;">800</div>
<div class="t" style="right:509.8px;top:390.01px;font-size:9.5px;line-height:13px;color:#000;letter-spacing:0.230px;">4,800</div>
<div class="t" style="right:473.8px;top:390.01px;font-size:9.5px;line-height:13px;color:#000;letter-spacing:0.230px;">3,200</div>
<div class="t" style="right:441.8px;top:390.01px;font-size:9.5px;line-height:13px;color:#000;letter-spacing:0.230px;">2,400</div>
<div class="t" style="right:395.8px;top:390.01px;font-size:9.5px;line-height:13px;color:#000;letter-spacing:0.230px;">1,500</div>
<div class="t" style="right:349.8px;top:390.01px;font-size:9.5px;line-height:13px;color:#000;letter-spacing:0.230px;">150</div>
<div class="t" style="left:452.6px;top:390.01px;font-size:9.5px;line-height:13px;color:#000;letter-spacing:0.300px;">6m</div>
<div class="t" style="right:254.79999999999995px;top:390.01px;font-size:9.5px;line-height:13px;color:#000;letter-spacing:0.230px;">150</div>
<div class="t" style="right:581.3px;top:404.01px;font-size:9.5px;line-height:13px;color:#000;letter-spacing:0.230px;">6</div>
<div class="t" style="right:548.8px;top:404.01px;font-size:9.5px;line-height:13px;color:#000;letter-spacing:0.230px;">1,600</div>
<div class="t" style="right:509.8px;top:404.01px;font-size:9.5px;line-height:13px;color:#000;letter-spacing:0.230px;">9,600</div>
<div class="t" style="right:473.8px;top:404.01px;font-size:9.5px;line-height:13px;color:#000;letter-spacing:0.230px;">6,400</div>
<div class="t" style="right:441.8px;top:404.01px;font-size:9.5px;line-height:13px;color:#000;letter-spacing:0.230px;">4,800</div>
<div class="t" style="right:395.8px;top:404.01px;font-size:9.5px;line-height:13px;color:#000;letter-spacing:0.230px;">2,100</div>
<div class="t" style="right:349.8px;top:404.01px;font-size:9.5px;line-height:13px;color:#000;letter-spacing:0.230px;">210</div>
<div class="t" style="left:452.6px;top:404.01px;font-size:9.5px;line-height:13px;color:#000;letter-spacing:0.300px;">12m</div>
<div class="t" style="right:254.79999999999995px;top:404.01px;font-size:9.5px;line-height:13px;color:#000;letter-spacing:0.230px;">210</div>
<div class="t" style="right:581.3px;top:418.01px;font-size:9.5px;line-height:13px;color:#000;letter-spacing:0.230px;">7</div>
<div class="t" style="right:548.8px;top:418.01px;font-size:9.5px;line-height:13px;color:#000;letter-spacing:0.230px;">3,200</div>
<div class="t" style="right:509.8px;top:418.01px;font-size:9.5px;line-height:13px;color:#000;letter-spacing:0.230px;">19,200</div>
<div class="t" style="right:473.8px;top:418.01px;font-size:9.5px;line-height:13px;color:#000;letter-spacing:0.230px;">12,800</div>
<div class="t" style="right:441.8px;top:418.01px;font-size:9.5px;line-height:13px;color:#000;letter-spacing:0.230px;">9,600</div>
<div class="t" style="right:395.8px;top:418.01px;font-size:9.5px;line-height:13px;color:#000;letter-spacing:0.230px;">2,800</div>
<div class="t" style="right:349.8px;top:418.01px;font-size:9.5px;line-height:13px;color:#000;letter-spacing:0.230px;">280</div>
<div class="t" style="left:452.6px;top:418.01px;font-size:9.5px;line-height:13px;color:#000;letter-spacing:0.300px;">20m</div>
<div class="t" style="right:254.79999999999995px;top:418.01px;font-size:9.5px;line-height:13px;color:#000;letter-spacing:0.230px;">280</div>
<div class="t" style="right:581.3px;top:431.01px;font-size:9.5px;line-height:13px;color:#000;letter-spacing:0.230px;">8</div>
<div class="t" style="right:548.8px;top:431.01px;font-size:9.5px;line-height:13px;color:#000;letter-spacing:0.230px;">6,400</div>
<div class="t" style="right:509.8px;top:431.01px;font-size:9.5px;line-height:13px;color:#000;letter-spacing:0.230px;">38,400</div>
<div class="t" style="right:473.8px;top:431.01px;font-size:9.5px;line-height:13px;color:#000;letter-spacing:0.230px;">25,600</div>
<div class="t" style="right:441.8px;top:431.01px;font-size:9.5px;line-height:13px;color:#000;letter-spacing:0.230px;">###</div>
<div class="t" style="right:395.8px;top:431.01px;font-size:9.5px;line-height:13px;color:#000;letter-spacing:0.230px;">3,600</div>
<div class="t" style="right:349.8px;top:431.01px;font-size:9.5px;line-height:13px;color:#000;letter-spacing:0.230px;">360</div>
<div class="t" style="left:452.6px;top:431.01px;font-size:9.5px;line-height:13px;color:#000;letter-spacing:0.300px;">45m</div>
<div class="t" style="right:254.79999999999995px;top:431.01px;font-size:9.5px;line-height:13px;color:#000;letter-spacing:0.230px;">360</div>
<div class="t" style="right:581.3px;top:445.01px;font-size:9.5px;line-height:13px;color:#000;letter-spacing:0.230px;">9</div>
<div class="t" style="right:548.8px;top:445.01px;font-size:9.5px;line-height:13px;color:#000;letter-spacing:0.230px;">12,800</div>
<div class="t" style="right:509.8px;top:445.01px;font-size:9.5px;line-height:13px;color:#000;letter-spacing:0.230px;">76,800</div>
<div class="t" style="right:473.8px;top:445.01px;font-size:9.5px;line-height:13px;color:#000;letter-spacing:0.230px;">51,200</div>
<div class="t" style="right:441.8px;top:445.01px;font-size:9.5px;line-height:13px;color:#000;letter-spacing:0.230px;">###</div>
<div class="t" style="right:395.8px;top:445.01px;font-size:9.5px;line-height:13px;color:#000;letter-spacing:0.230px;">4,500</div>
<div class="t" style="right:349.8px;top:445.01px;font-size:9.5px;line-height:13px;color:#000;letter-spacing:0.230px;">450</div>
<div class="t" style="left:452.6px;top:445.01px;font-size:9.5px;line-height:13px;color:#000;letter-spacing:0.300px;">1h 30m</div>
<div class="t" style="right:254.79999999999995px;top:445.01px;font-size:9.5px;line-height:13px;color:#000;letter-spacing:0.230px;">450</div>
<div class="t" style="right:581.3px;top:470.11px;font-size:9.5px;line-height:13px;color:#000;letter-spacing:0.230px;">10</div>
<div class="t" style="right:548.8px;top:470.11px;font-size:9.5px;line-height:13px;color:#000;letter-spacing:0.230px;">25,600</div>
<div class="t" style="right:509.8px;top:470.11px;font-size:9.5px;line-height:13px;color:#000;letter-spacing:0.230px;">153,600</div>
<div class="t" style="right:473.8px;top:470.11px;font-size:9.5px;line-height:13px;color:#000;letter-spacing:0.230px;">###</div>
<div class="t" style="right:441.8px;top:470.11px;font-size:9.5px;line-height:13px;color:#000;letter-spacing:0.230px;">###</div>
<div class="t" style="right:395.8px;top:470.11px;font-size:9.5px;line-height:13px;color:#000;letter-spacing:0.230px;">5,500</div>
<div class="t" style="right:349.8px;top:470.11px;font-size:9.5px;line-height:13px;color:#000;letter-spacing:0.230px;">550</div>
<div class="t" style="left:452.6px;top:470.11px;font-size:9.5px;line-height:13px;color:#000;letter-spacing:0.300px;">2h</div>
<div class="t" style="right:254.79999999999995px;top:470.11px;font-size:9.5px;line-height:13px;color:#000;letter-spacing:0.230px;">550</div>
<div class="t" style="left:640.1px;top:470.11px;font-size:9.5px;line-height:13px;color:#000;letter-spacing:0.206px;"><span style="text-decoration:underline wavy #e00000 0.6px;text-underline-offset:-1px;text-decoration-skip-ink:none">Michaelangelo</span> Script</div>
<div class="t" style="left:36.3px;top:484.01px;font-size:9.5px;line-height:13px;color:#000;letter-spacing:0.300px;">Sawmill</div>
<div class="t" style="right:581.3px;top:484.01px;font-size:9.5px;line-height:13px;color:#000;letter-spacing:0.230px;">1</div>
<div class="t" style="right:548.8px;top:484.01px;font-size:9.5px;line-height:13px;color:#000;letter-spacing:0.230px;">100</div>
<div class="t" style="right:509.8px;top:484.01px;font-size:9.5px;line-height:13px;color:#000;letter-spacing:0.230px;">100</div>
<div class="t" style="right:473.8px;top:484.01px;font-size:9.5px;line-height:13px;color:#000;letter-spacing:0.230px;">250</div>
<div class="t" style="right:441.8px;top:484.01px;font-size:9.5px;line-height:13px;color:#000;letter-spacing:0.230px;">300</div>
<div class="t" style="right:395.8px;top:484.01px;font-size:9.5px;line-height:13px;color:#000;letter-spacing:0.230px;">100</div>
<div class="t" style="right:349.8px;top:484.01px;font-size:9.5px;line-height:13px;color:#000;letter-spacing:0.230px;">10</div>
<div class="t" style="left:452.6px;top:484.01px;font-size:9.5px;line-height:13px;color:#000;letter-spacing:0.300px;">1m</div>
<div class="t" style="right:254.79999999999995px;top:484.01px;font-size:9.5px;line-height:13px;color:#000;letter-spacing:0.230px;">10</div>
<div class="t" style="left:547.5px;top:484.01px;font-size:9.5px;line-height:13px;color:#000;letter-spacing:0.300px;">yes</div>
<div class="t" style="right:581.3px;top:498.01px;font-size:9.5px;line-height:13px;color:#000;letter-spacing:0.230px;">2</div>
<div class="t" style="right:548.8px;top:498.01px;font-size:9.5px;line-height:13px;color:#000;letter-spacing:0.230px;">200</div>
<div class="t" style="right:509.8px;top:498.01px;font-size:9.5px;line-height:13px;color:#000;letter-spacing:0.230px;">200</div>
<div class="t" style="right:473.8px;top:498.01px;font-size:9.5px;line-height:13px;color:#000;letter-spacing:0.230px;">500</div>
<div class="t" style="right:441.8px;top:498.01px;font-size:9.5px;line-height:13px;color:#000;letter-spacing:0.230px;">600</div>
<div class="t" style="right:395.8px;top:498.01px;font-size:9.5px;line-height:13px;color:#000;letter-spacing:0.230px;">300</div>
<div class="t" style="right:349.8px;top:498.01px;font-size:9.5px;line-height:13px;color:#000;letter-spacing:0.230px;">30</div>
<div class="t" style="left:452.6px;top:498.01px;font-size:9.5px;line-height:13px;color:#000;letter-spacing:0.300px;">2m</div>
<div class="t" style="right:254.79999999999995px;top:498.01px;font-size:9.5px;line-height:13px;color:#000;letter-spacing:0.230px;">30</div>
<div class="t" style="left:547.5px;top:498.01px;font-size:9.5px;line-height:13px;color:#000;letter-spacing:0.300px;">yes</div>
<div class="t" style="right:581.3px;top:511.01px;font-size:9.5px;line-height:13px;color:#000;letter-spacing:0.230px;">3</div>
<div class="t" style="right:548.8px;top:511.01px;font-size:9.5px;line-height:13px;color:#000;letter-spacing:0.230px;">400</div>
<div class="t" style="right:509.8px;top:511.01px;font-size:9.5px;line-height:13px;color:#000;letter-spacing:0.230px;">400</div>
<div class="t" style="right:473.8px;top:511.01px;font-size:9.5px;line-height:13px;color:#000;letter-spacing:0.230px;">1,000</div>
<div class="t" style="right:441.8px;top:511.01px;font-size:9.5px;line-height:13px;color:#000;letter-spacing:0.230px;">1,200</div>
<div class="t" style="right:395.8px;top:511.01px;font-size:9.5px;line-height:13px;color:#000;letter-spacing:0.230px;">600</div>
<div class="t" style="right:349.8px;top:511.01px;font-size:9.5px;line-height:13px;color:#000;letter-spacing:0.230px;">60</div>
<div class="t" style="left:452.6px;top:511.01px;font-size:9.5px;line-height:13px;color:#000;letter-spacing:0.300px;">4m</div>
<div class="t" style="right:254.79999999999995px;top:511.01px;font-size:9.5px;line-height:13px;color:#000;letter-spacing:0.230px;">60</div>
<div class="t" style="left:547.5px;top:511.01px;font-size:9.5px;line-height:13px;color:#000;letter-spacing:0.300px;">yes</div>
<div class="t" style="right:581.3px;top:525.01px;font-size:9.5px;line-height:13px;color:#000;letter-spacing:0.230px;">4</div>
<div class="t" style="right:548.8px;top:525.01px;font-size:9.5px;line-height:13px;color:#000;letter-spacing:0.230px;">800</div>
<div class="t" style="right:509.8px;top:525.01px;font-size:9.5px;line-height:13px;color:#000;letter-spacing:0.230px;">800</div>
<div class="t" style="right:473.8px;top:525.01px;font-size:9.5px;line-height:13px;color:#000;letter-spacing:0.230px;">2,000</div>
<div class="t" style="right:441.8px;top:525.01px;font-size:9.5px;line-height:13px;color:#000;letter-spacing:0.230px;">2,400</div>
<div class="t" style="right:395.8px;top:525.01px;font-size:9.5px;line-height:13px;color:#000;letter-spacing:0.230px;">1,000</div>
<div class="t" style="right:349.8px;top:525.01px;font-size:9.5px;line-height:13px;color:#000;letter-spacing:0.230px;">100</div>
<div class="t" style="left:452.6px;top:525.01px;font-size:9.5px;line-height:13px;color:#000;letter-spacing:0.300px;">6m</div>
<div class="t" style="right:254.79999999999995px;top:525.01px;font-size:9.5px;line-height:13px;color:#000;letter-spacing:0.230px;">100</div>
<div class="t" style="right:581.3px;top:538.01px;font-size:9.5px;line-height:13px;color:#000;letter-spacing:0.230px;">5</div>
<div class="t" style="right:548.8px;top:538.01px;font-size:9.5px;line-height:13px;color:#000;letter-spacing:0.230px;">1,600</div>
<div class="t" style="right:509.8px;top:538.01px;font-size:9.5px;line-height:13px;color:#000;letter-spacing:0.230px;">1,600</div>
<div class="t" style="right:473.8px;top:538.01px;font-size:9.5px;line-height:13px;color:#000;letter-spacing:0.230px;">4,000</div>
<div class="t" style="right:441.8px;top:538.01px;font-size:9.5px;line-height:13px;color:#000;letter-spacing:0.230px;">4,800</div>
<div class="t" style="right:395.8px;top:538.01px;font-size:9.5px;line-height:13px;color:#000;letter-spacing:0.230px;">1,500</div>
<div class="t" style="right:349.8px;top:538.01px;font-size:9.5px;line-height:13px;color:#000;letter-spacing:0.230px;">150</div>
<div class="t" style="left:452.6px;top:538.01px;font-size:9.5px;line-height:13px;color:#000;letter-spacing:0.300px;">12m</div>
<div class="t" style="right:254.79999999999995px;top:538.01px;font-size:9.5px;line-height:13px;color:#000;letter-spacing:0.230px;">150</div>
<div class="t" style="right:581.3px;top:552.01px;font-size:9.5px;line-height:13px;color:#000;letter-spacing:0.230px;">6</div>
<div class="t" style="right:548.8px;top:552.01px;font-size:9.5px;line-height:13px;color:#000;letter-spacing:0.230px;">3,200</div>
<div class="t" style="right:509.8px;top:552.01px;font-size:9.5px;line-height:13px;color:#000;letter-spacing:0.230px;">3,200</div>
<div class="t" style="right:473.8px;top:552.01px;font-size:9.5px;line-height:13px;color:#000;letter-spacing:0.230px;">8,000</div>
<div class="t" style="right:441.8px;top:552.01px;font-size:9.5px;line-height:13px;color:#000;letter-spacing:0.230px;">9,600</div>
<div class="t" style="right:395.8px;top:552.01px;font-size:9.5px;line-height:13px;color:#000;letter-spacing:0.230px;">2,100</div>
<div class="t" style="right:349.8px;top:552.01px;font-size:9.5px;line-height:13px;color:#000;letter-spacing:0.230px;">210</div>
<div class="t" style="left:452.6px;top:552.01px;font-size:9.5px;line-height:13px;color:#000;letter-spacing:0.300px;">24m</div>
<div class="t" style="right:254.79999999999995px;top:552.01px;font-size:9.5px;line-height:13px;color:#000;letter-spacing:0.230px;">210</div>
<div class="t" style="right:581.3px;top:566.01px;font-size:9.5px;line-height:13px;color:#000;letter-spacing:0.230px;">7</div>
<div class="t" style="right:548.8px;top:566.01px;font-size:9.5px;line-height:13px;color:#000;letter-spacing:0.230px;">6,400</div>
<div class="t" style="right:509.8px;top:566.01px;font-size:9.5px;line-height:13px;color:#000;letter-spacing:0.230px;">6,400</div>
<div class="t" style="right:473.8px;top:566.01px;font-size:9.5px;line-height:13px;color:#000;letter-spacing:0.230px;">16,000</div>
<div class="t" style="right:441.8px;top:566.01px;font-size:9.5px;line-height:13px;color:#000;letter-spacing:0.230px;">###</div>
<div class="t" style="right:395.8px;top:566.01px;font-size:9.5px;line-height:13px;color:#000;letter-spacing:0.230px;">2,800</div>
<div class="t" style="right:349.8px;top:566.01px;font-size:9.5px;line-height:13px;color:#000;letter-spacing:0.230px;">280</div>
<div class="t" style="left:452.6px;top:566.01px;font-size:9.5px;line-height:13px;color:#000;letter-spacing:0.300px;">48m</div>
<div class="t" style="right:254.79999999999995px;top:566.01px;font-size:9.5px;line-height:13px;color:#000;letter-spacing:0.230px;">280</div>
<div class="b" style="left:35px;top:185px;width:93px;height:1px;background:rgba(40,40,40,0.350)"></div>
<div class="b" style="left:35px;top:186px;width:93px;height:2px;background:#2f2d2e"></div>
<div class="b" style="left:34px;top:200px;width:95px;height:2px;background:#2f2b2d"></div>
<div class="b" style="left:34px;top:186px;width:2px;height:16px;background:#2f2d2e"></div>
<div class="b" style="left:127px;top:186px;width:2px;height:16px;background:#383536"></div>
<div class="b" style="left:126px;top:200px;width:5px;height:5px;background:#383536"></div>
</div>
<div class="b" style="left:1px;top:144px;width:797px;height:1px;background:#1a1a1a"></div>
<div class="b" style="left:1px;top:144px;width:1px;height:438px;background:#1a1a1a"></div>
<div class="b" style="left:787px;top:145px;width:12px;height:426px;background:#f1f0ef"></div>
<div class="b" style="left:787px;top:154px;width:12px;height:406px;background:linear-gradient(90deg,#bab8b4,#dcdad7 18%,#e1dfdc 55%,#d9d7d4);border-radius:5px"></div>
<svg style="left:787px;top:145px" width="11" height="11"><path d="M2.800 7.300L5.500 4L8.200 7.300Z" fill="#74736f"/></svg>
<div class="b" style="left:787px;top:155px;width:11px;height:154px;background:linear-gradient(90deg,#fbfbfa,#f3f2f1 50%,#e4e3e1);border:1px solid #b3b1ad;border-radius:5px"></div>
<svg style="left:790px;top:228px" width="6" height="8"><path d="M0.500 1.500h4M0.500 3.500h4M0.500 5.500h4" stroke="#a5a3a0" stroke-width="0.800"/></svg>
<svg style="left:787px;top:559px" width="11" height="12"><path d="M2.800 4.500L5.500 7.900L8.200 4.500Z" fill="#74736f"/></svg>
<div class="b" style="left:2px;top:571px;width:216px;height:11px;background:#d5d2cd"></div>
<svg style="left:1px;top:570.500px" width="44" height="12" viewBox="0 0 44 12">
<defs><linearGradient id="nb" x1="0" y1="0" x2="0" y2="1"><stop offset="0" stop-color="#fbfbfa"/><stop offset="1" stop-color="#dddbd8"/></linearGradient></defs>
<rect x="1" y="0.500" width="42" height="11" fill="#d0cdc8"/>
<circle cx="5.5" cy="6.100" r="4.400" fill="url(#nb)" stroke="#b3b0ab" stroke-width="0.800"/>
<circle cx="16" cy="6.100" r="4.400" fill="url(#nb)" stroke="#b3b0ab" stroke-width="0.800"/>
<circle cx="26.5" cy="6.100" r="4.400" fill="url(#nb)" stroke="#b3b0ab" stroke-width="0.800"/>
<circle cx="37" cy="6.100" r="4.400" fill="url(#nb)" stroke="#b3b0ab" stroke-width="0.800"/>
<path d="M7 4.600v3l-2.200-1.500z M4.200 4.600v3" fill="#85827d" stroke="#85827d" stroke-width="0.600"/>
<path d="M17 4.600v3l-2.100-1.500z" fill="#85827d"/>
<path d="M25.700 4.600v3l2.100-1.500z" fill="#85827d"/>
<path d="M35.500 4.600v3l2.200-1.500z M38.300 4.600v3" fill="#85827d" stroke="#85827d" stroke-width="0.600"/>
</svg>
<svg style="left:0px;top:0px" width="800" height="600" viewBox="0 0 800 600">
<rect x="44" y="571" width="175" height="11" fill="#e6e4e0"/>
<path d="M51.2 571H82L85.8 576L84.3 580.4H50.5L48.6 576Z" fill="#d9d7d3"/>
<path d="M153.5 571H213.5V580.4H152L150 576.3Z" fill="#d9d7d3"/>
<path d="M83 570.4L87.6 580.6H148.6L153.2 570.4Z" fill="#fff"/>
<path d="M44 570.9H82.6M153 570.9H214" stroke="#161616" stroke-width="1.5" fill="none"/>
<path d="M50.5 580.3H84.3M152 580.3H214" stroke="#161616" stroke-width="1.5" fill="none"/>
<path d="M87.4 580.5H148.8" stroke="#161616" stroke-width="1.2" fill="none"/>
<path d="M44.4 580.6L50 571" stroke="#161616" stroke-width="1.3" fill="none"/>
<path d="M51.3 571.2L48.700 576.100L50.600 580.300" stroke="#161616" stroke-width="1.2" fill="none"/>
<path d="M82 571L85.900 576.200L84.300 580.300" stroke="#161616" stroke-width="1.2" fill="none"/>
<path d="M82.800 570.600L87.500 580.600" stroke="#161616" stroke-width="1.3" fill="none"/>
<path d="M148.600 580.600L153.300 570.800" stroke="#161616" stroke-width="1.3" fill="none"/>
<path d="M153.600 571.200L150.100 576.400L152.100 580.300" stroke="#161616" stroke-width="1.2" fill="none"/>
<rect x="214" y="570.200" width="3.600" height="10.800" fill="#fff" stroke="#111" stroke-width="1.200"/>
</svg>
<div class="t" style="left:53.3px;top:569.34px;font-size:9.7px;line-height:13px;color:#2b2b33;letter-spacing:-0.305px;">Troops</div>
<div class="t" style="left:90.5px;top:569.34px;font-size:9.7px;line-height:13px;color:#111;font-weight:bold;letter-spacing:-0.550px;">City Buildings</div>
<div class="b" style="left:155px;top:570px;width:58.500px;height:12px;overflow:hidden">
<div class="t" style="left:0.6px;top:-0.66px;font-size:9.7px;line-height:13px;color:#2b2b33;letter-spacing:-0.193px;">Town Buildings</div>
</div>
<div class="b" style="left:219px;top:571px;width:566px;height:11px;background:#f1f0ef"></div>
<div class="b" style="left:226px;top:571px;width:550px;height:11px;background:linear-gradient(#c9c7c4,#dbd9d6 45%,#d7d5d2);border-radius:5px"></div>
<svg style="left:219px;top:570.500px" width="9" height="12"><path d="M6.2 3.3v5.4L2.6 6z" fill="#6b6a66"/></svg>
<div class="b" style="left:227px;top:571px;width:226px;height:11px;background:linear-gradient(#fbfbfa,#f1f0ef 50%,#e3e2e0);border:1px solid #b3b1ad;border-radius:6px"></div>
<svg style="left:336px;top:573.800px" width="8" height="6"><path d="M1.5 0.5v4M3.5 0.5v4M5.5 0.5v4" stroke="#a5a3a0" stroke-width="0.8"/></svg>
<svg style="left:774px;top:570.500px" width="11" height="12"><path d="M4.3 3.3v5.4L8 6z" fill="#6b6a66"/></svg>
<div class="b" style="left:785px;top:571px;width:2px;height:11px;background:#0a0a0a"></div>
<div class="b" style="left:787px;top:571px;width:11px;height:11px;background:#efeeed"></div>
<div class="b" style="left:1px;top:582px;width:798px;height:18px;background:#f2f1f0"></div>
<div class="b" style="left:1px;top:582px;width:798px;height:1px;background:#b9b7b3"></div>
<div class="b" style="left:1px;top:583px;width:798px;height:1px;background:#f8f8f7"></div>
<div class="b" style="left:0px;top:599px;width:800px;height:1px;background:#a3a19d"></div>
<div class="t" style="left:9px;top:585.14px;font-size:9.7px;line-height:13px;color:#444;letter-spacing:0.099px;">Sheet 3 / 12</div>
<div class="b" style="left:191px;top:585px;width:1px;height:14px;background:#1f1f1f"></div>
<div class="b" style="left:192px;top:585px;width:1px;height:14px;background:rgba(0,0,0,0.25)"></div>
<div class="b" style="left:352px;top:585px;width:1px;height:14px;background:#1f1f1f"></div>
<div class="b" style="left:353px;top:585px;width:1px;height:14px;background:rgba(0,0,0,0.25)"></div>
<div class="b" style="left:395px;top:585px;width:1px;height:14px;background:#1f1f1f"></div>
<div class="b" style="left:396px;top:585px;width:1px;height:14px;background:rgba(0,0,0,0.25)"></div>
<div class="b" style="left:423px;top:585px;width:1px;height:14px;background:#1f1f1f"></div>
<div class="b" style="left:424px;top:585px;width:1px;height:14px;background:rgba(0,0,0,0.25)"></div>
<div class="b" style="left:447px;top:585px;width:1px;height:14px;background:#1f1f1f"></div>
<div class="b" style="left:448px;top:585px;width:1px;height:14px;background:rgba(0,0,0,0.25)"></div>
<div class="b" style="left:471px;top:585px;width:1px;height:14px;background:#1f1f1f"></div>
<div class="b" style="left:472px;top:585px;width:1px;height:14px;background:rgba(0,0,0,0.25)"></div>
<div class="b" style="left:641px;top:585px;width:1px;height:14px;background:#1f1f1f"></div>
<div class="b" style="left:642px;top:585px;width:1px;height:14px;background:rgba(0,0,0,0.25)"></div>
<div class="b" style="left:762px;top:585px;width:1px;height:14px;background:#1f1f1f"></div>
<div class="b" style="left:763px;top:585px;width:1px;height:14px;background:rgba(0,0,0,0.25)"></div>
<div class="t" style="left:196px;top:585.14px;font-size:9.7px;line-height:13px;color:#444;letter-spacing:0.044px;">mp0</div>
<div class="t" style="left:399px;top:585.14px;font-size:9.7px;line-height:13px;color:#444;letter-spacing:-0.967px;">STD</div>
<div class="t" style="left:540px;top:585.14px;font-size:9.7px;line-height:13px;color:#444;letter-spacing:-0.501px;">Sum=0</div>
<div class="t" style="left:767px;top:585.14px;font-size:9.7px;line-height:13px;color:#444;letter-spacing:-0.327px;">100%</div>
<svg style="left:643px;top:584px" width="118" height="15" viewBox="0 0 118 15">
<defs><radialGradient id="zb" cx="0.5" cy="0.35" r="0.7"><stop offset="0" stop-color="#ffffff"/><stop offset="1" stop-color="#b9d0ea"/></radialGradient></defs>
<path d="M15 7.5H99" stroke="#8a8a8a" stroke-width="1"/>
<circle cx="6.2" cy="7.3" r="4.1" fill="url(#zb)" stroke="#35506e" stroke-width="1"/>
<path d="M3.8 7.3h4.8" stroke="#1f3550" stroke-width="1.2"/>
<circle cx="108.5" cy="7.3" r="4.1" fill="url(#zb)" stroke="#35506e" stroke-width="1"/>
<path d="M106.1 7.3h4.8M108.5 4.9v4.8" stroke="#1f3550" stroke-width="1.2"/>
<path d="M53.400 6.200a2.900 2.900 0 1 1 5.800 0c0 1.600-1.500 2.800-2.900 4.300c-1.400-1.500-2.900-2.700-2.900-4.300z" fill="#6a8fb8" stroke="#2d4c70" stroke-width="0.800"/>
</svg>
</body></html>
